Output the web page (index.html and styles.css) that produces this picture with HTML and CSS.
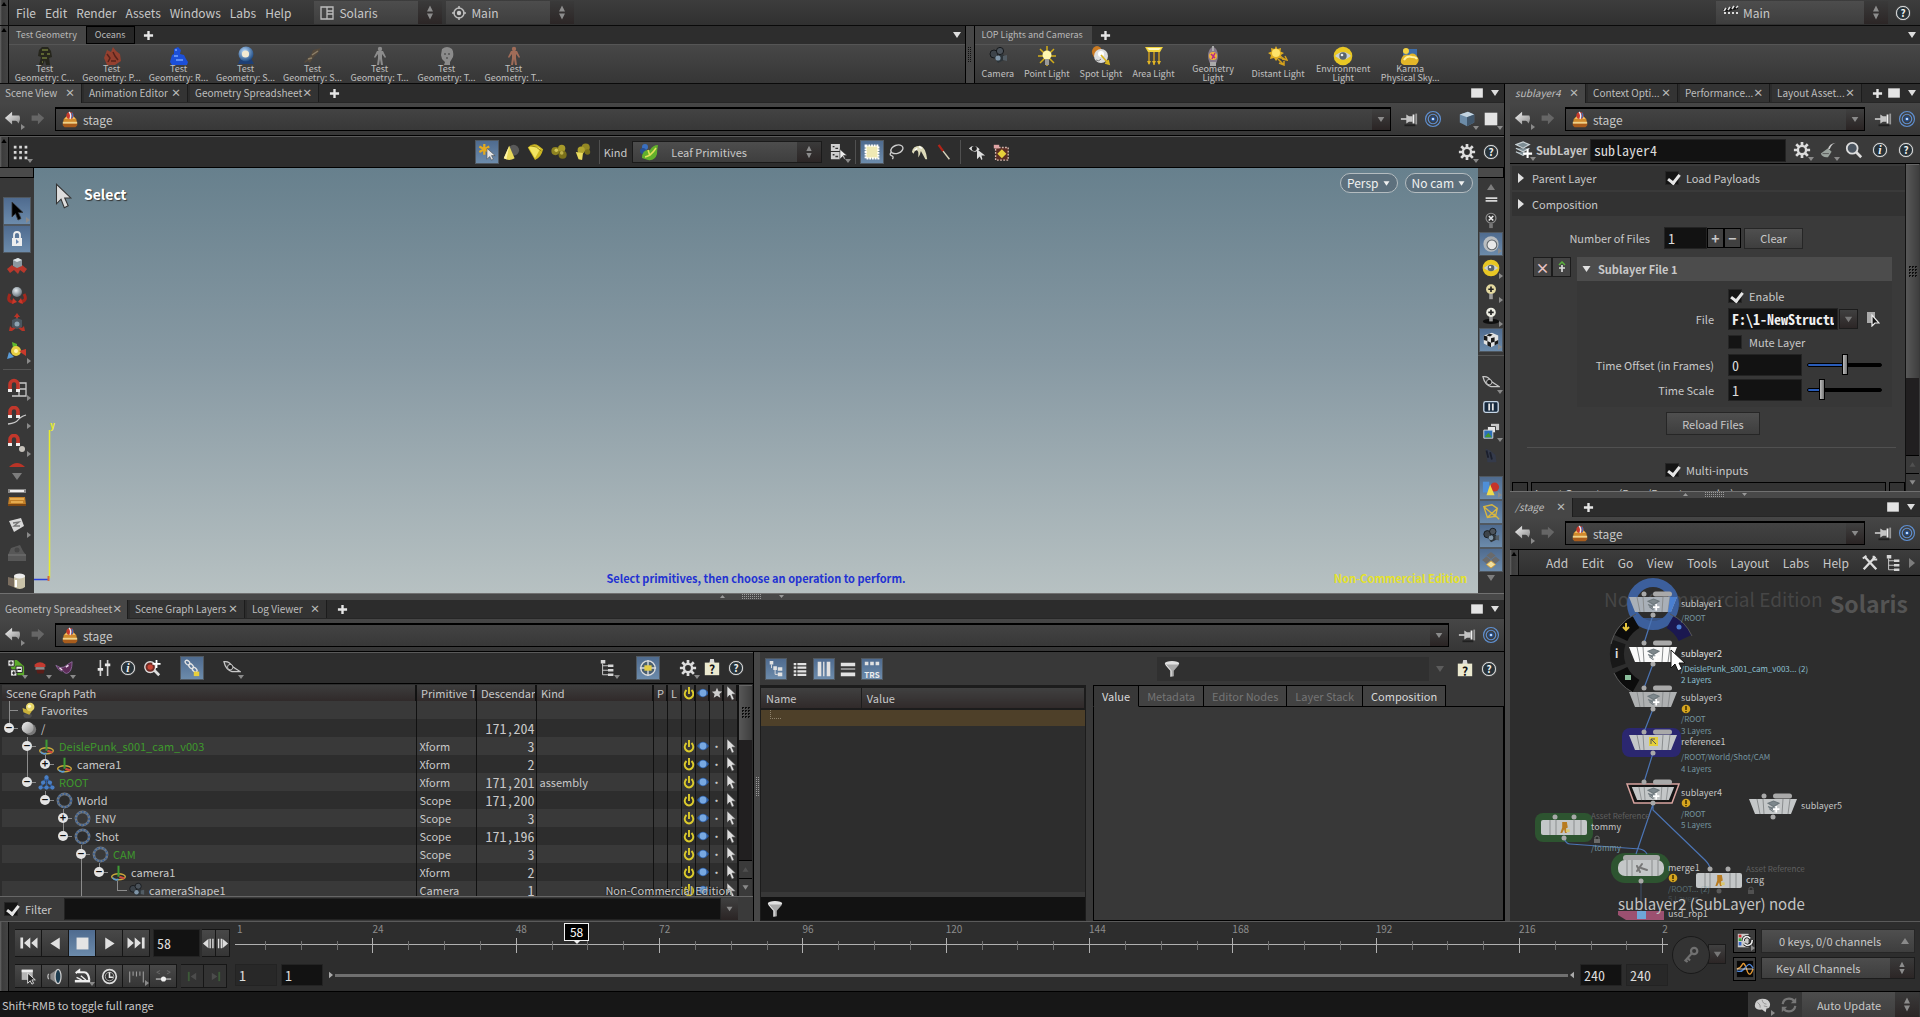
FILE: index.html
```html
<!DOCTYPE html>
<html lang="en">
<head>
<meta charset="utf-8">
<title>Solaris</title>
<link rel="stylesheet" href="styles.css">
</head>
<body>
<svg class="defs" aria-hidden="true">
  <defs>
    <linearGradient id="silver" x1="0" y1="0" x2="1" y2="1"><stop offset="0" stop-color="#f4f4f4"/><stop offset="1" stop-color="#8c8c8c"/></linearGradient>
    <radialGradient id="blueball" cx=".4" cy=".35" r=".7"><stop offset="0" stop-color="#bfe0ff"/><stop offset="1" stop-color="#15427c"/></radialGradient>
    <radialGradient id="greyball" cx=".4" cy=".35" r=".7"><stop offset="0" stop-color="#e6edf2"/><stop offset="1" stop-color="#5c6870"/></radialGradient>
  </defs>
  <symbol id="back" viewBox="0 0 20 20"><path d="M1 9l8-7v4h8q2 4-1 9-1-3-3-3H9v4z" fill="url(#silver)"/></symbol>
  <symbol id="fwd" viewBox="0 0 20 20"><path d="M18 9l-7-6v3H4v6h7v4z" fill="#666"/></symbol>
  <symbol id="stage" viewBox="0 0 20 20"><path d="M3 9l3-3h8l3 3 1 6-2 2H4l-2-2z" fill="#d08a2c"/><path d="M2 14h16v2l-2 2H4l-2-2z" fill="#a85c1c"/><path d="M2 12h16v2H2z" fill="#efd28a"/><path d="M4 9h12l-2-3H6z" fill="#f0c060"/><circle cx="10" cy="5" r="4" fill="#c93a2c"/><path d="M9 1q3 3 1 8" stroke="#e8eef8" stroke-width="1.6" fill="none"/><path d="M12 2q2 3 0 6" stroke="#3c6cb4" stroke-width="1.4" fill="none"/></symbol>
  <symbol id="pin" viewBox="0 0 20 20"><path d="M1 10h7" stroke="#ddd" stroke-width="1.600"/><path d="M7 5l3 2h4v6h-4l-3 2z" fill="#c4c4c4"/><path d="M15 5v10" stroke="#f0f0f0" stroke-width="2"/><path d="M18 4v12" stroke="#9a9a9a" stroke-width="2"/><path d="M5 17h12" stroke="#202020" stroke-width="2"/></symbol>
  <symbol id="target" viewBox="0 0 20 20"><g fill="none" stroke="#5f8fd0" stroke-width="1.300"><circle cx="10" cy="10" r="8.300"/><circle cx="10" cy="10" r="5.300"/></g><circle cx="10" cy="10" r="3" fill="#214a86"/><circle cx="10" cy="10" r="1.500" fill="#bcd9ff"/></symbol>
  <symbol id="cube" viewBox="0 0 20 20"><path d="M2 5l9-3 7 3v9l-8 4-8-4z" fill="#6d8ca8"/><path d="M2 5l9-3 7 3-8 3z" fill="#c4d4e0"/><path d="M10 8l8-3v9l-8 4z" fill="#41576c"/></symbol>
  <symbol id="gear" viewBox="0 0 20 20"><g stroke="#dcdcdc" stroke-width="3"><path d="M10 1v5M10 14v5M1 10h5M14 10h5M3.600 3.600l3.500 3.500M13 13l3.500 3.500M16.400 3.600l-3.500 3.500M7 13l-3.500 3.500"/></g><circle cx="10" cy="10" r="4.500" fill="none" stroke="#dcdcdc" stroke-width="2.600"/></symbol>
  <symbol id="search" viewBox="0 0 20 20"><path d="M12 12l6 6" stroke="#ddd" stroke-width="3"/><circle cx="8" cy="8" r="6" fill="#4b5560" stroke="#ddd" stroke-width="2"/></symbol>
  <symbol id="plus" viewBox="0 0 12 12"><path d="M6 1v10M1 6h10" stroke="#e6e6e6" stroke-width="2.600"/></symbol>
  <symbol id="pane" viewBox="0 0 12 12"><path d="M1 2h10v8H1z" fill="#e4e4e4"/></symbol>
  <symbol id="down" viewBox="0 0 12 12"><path d="M2 3h8l-4 6z" fill="currentColor"/></symbol>
  <symbol id="up" viewBox="0 0 12 12"><path d="M2 9h8L6 3z" fill="currentColor"/></symbol>
  <symbol id="right" viewBox="0 0 12 12"><path d="M3 1v10l6-5z" fill="currentColor"/></symbol>
  <symbol id="spin" viewBox="0 0 12 18"><path d="M3 8l3-6 3 6zM3 10h6l-3 6z" fill="#8c8c8c"/></symbol>
  <symbol id="layout" viewBox="0 0 14 14"><path d="M1 1h12v12H1zM7 1v12M7 8h6M7 5h6" fill="none" stroke="#bdbdbd" stroke-width="1.300"/></symbol>
  <symbol id="radial" viewBox="0 0 14 14"><circle cx="7" cy="7" r="5" fill="none" stroke="#bdbdbd" stroke-width="1.500"/><circle cx="7" cy="7" r="2.200" fill="#ccc"/><path d="M7 0v3M7 11v3M0 7h3M11 7h3" stroke="#bdbdbd" stroke-width="1.500"/></symbol>
  <symbol id="clap" viewBox="0 0 18 18"><path d="M2 8h14v8H2z" fill="#444"/><path d="M1 5l15-3v3L2 8z" fill="#111"/><path d="M2 7l2-3M6 6l2-3M10 5l2-3M14 4l2-2" stroke="#ddd" stroke-width="1.600"/><path d="M2 9h14" stroke="#ddd" stroke-dasharray="2 2" stroke-width="2"/></symbol>
  <symbol id="crag" viewBox="0 0 20 20"><path d="M7 1h6l3 4 1 6-3 1 1 7h-4l-1-5-2 5H4l2-8-3-1 1-6z" fill="#26261d"/><path d="M7 4h6M6 8h3M12 8h3M7 12h5M7 16h1" stroke="#6f7a3a" stroke-width="1.300"/></symbol>
  <symbol id="pig" viewBox="0 0 20 20"><path d="M2 12l3-8 4 2 2-5 3 4 4 3 1 7-6 4H5z" fill="#94402f"/><path d="M5 8l3 4-2 4M11 6l2 4 3 4M9 15h5" stroke="#57231b" stroke-width="1.500" fill="none"/></symbol>
  <symbol id="rubber" viewBox="0 0 20 20"><path d="M1 16l2-7 2-1V3l4-2 3 3-1 4 4 1 2 4 2 3-1 3H3z" fill="#1c4fd8"/><path d="M5 10h4M7 14h7M6 4h2" stroke="#73a4ff" stroke-width="1.500"/></symbol>
  <symbol id="shader" viewBox="0 0 20 20"><path d="M4 13l-2 5h16l-3-6z" fill="#1f3f74"/><circle cx="10" cy="8" r="7.500" fill="url(#blueball)"/><circle cx="9.500" cy="8" r="3.600" fill="#f3ead2"/></symbol>
  <symbol id="squab" viewBox="0 0 20 20"><path d="M1 16l7-7 2-5 8-2-3 5-5 5-3 5-2-2-3 2z" fill="#54493c"/><path d="M9 9l6-4M5 13l4-1" stroke="#8d8069" stroke-width="1.500"/></symbol>
  <symbol id="human" viewBox="0 0 20 20"><circle cx="10" cy="3" r="2.200" fill="currentColor"/><path d="M7 5h6l3 6-1 1-3-4v4l1 7h-2l-1-6-1 6H7l1-7V8l-3 4-1-1z" fill="currentColor"/></symbol>
  <symbol id="head" viewBox="0 0 20 20"><path d="M5 3q5-4 10 0 2 3 1 8l-3 5v3H7l1-3-3-3-1-4z" fill="#8b8b8b"/><path d="M7 8h2M11 8h2M9 12h2" stroke="#555" stroke-width="1.300"/></symbol>
  <symbol id="cam" viewBox="0 0 20 20"><circle cx="6" cy="8" r="4" fill="#3d444b" stroke="#15181b"/><circle cx="12" cy="5" r="3.600" fill="#4c545c" stroke="#15181b"/><path d="M6 11l9-3 3 5-8 4z" fill="#2d3439"/><circle cx="10" cy="12" r="2.600" fill="#7f95a8"/><path d="M15 10l4-1v6l-4-1z" fill="#525c64"/></symbol>
  <symbol id="plight" viewBox="0 0 20 20"><path d="M10 0v20M1 10h18M3 3l14 14M17 3L3 17" stroke="#d2ad1a" stroke-width="1.500"/><circle cx="10" cy="9" r="4.500" fill="#fff7b0"/><path d="M8 13h4v6H8z" fill="#9a9a9a"/></symbol>
  <symbol id="slight" viewBox="0 0 20 20"><ellipse cx="6" cy="6" rx="5" ry="6" fill="#c97a23"/><circle cx="10" cy="10" r="7" fill="#dcdcdc"/><circle cx="10" cy="8" r="3" fill="#fff"/><path d="M10 9l7 8M14 17l4 1-1-4" stroke="#d9b521" stroke-width="1.700" fill="none"/><path d="M5 14q3 2 5-1" stroke="#777" fill="none"/></symbol>
  <symbol id="alight" viewBox="0 0 20 20"><path d="M1 1h18l-3 5H4z" fill="#f0d23c"/><path d="M3 2h14l-2 2H5z" fill="#fff8c0"/><path d="M5 6v12M10 6v13M15 6v12" stroke="#c99a20" stroke-width="1.500"/><path d="M3 15l2 4 2-4zM8 15l2 4 2-4zM13 15l2 4 2-4z" fill="#e0b526"/></symbol>
  <symbol id="glight" viewBox="0 0 20 20"><ellipse cx="10" cy="10" rx="5" ry="9" fill="#857a8a"/><path d="M9 0h2v5H9zM7 16h6v4H7z" fill="#aaa"/><circle cx="10" cy="10" r="4" fill="#f2b23a"/><path d="M8 8l4 4M12 7l-3 6" stroke="#b42b8a" stroke-width="1.500"/></symbol>
  <symbol id="dlight" viewBox="0 0 20 20"><path d="M8 0l1.500 3L13 2l-.5 3.500L16 7l-3 2 1 4-3.500-1L8 15l-2-3-4 1 1-4-3-2 3.500-1.500L3 2l3.500 1z" fill="#e0ae22"/><circle cx="8" cy="7" r="4" fill="#ffe46a"/><path d="M12 10l6 4M10 13l5 5M14 13l5 1-2-4M11 17l5 2v-4" stroke="#d4a01c" stroke-width="1.500" fill="none"/></symbol>
  <symbol id="elight" viewBox="0 0 20 20"><circle cx="10" cy="10" r="9.300" fill="#e8c724"/><path d="M2 10q8-8 16 0-8 7-16 0z" fill="#c9d0d4"/><circle cx="10" cy="10" r="3.700" fill="#59646c"/><circle cx="9" cy="9" r="1.300" fill="#eee"/></symbol>
  <symbol id="sky" viewBox="0 0 20 20"><path d="M3 3h14v8H3z" fill="#3e6ca8"/><path d="M1 14q2-7 8-5 5-4 9 3 2 3-2 7H4q-4-1-3-5z" fill="#e3b628"/><path d="M4 14q3-5 8-3 4 0 5 2" stroke="#fff2a0" stroke-width="2" fill="none"/><circle cx="6" cy="5" r="3" fill="#f5d240"/></symbol>
  <symbol id="dots" viewBox="0 0 20 20"><g fill="#d8d8d8"><path d="M2 3h3v3H2zM8 3h3v3H8zM14 3h3v3h-3zM2 9h3v3H2zM8 9h3v3H8zM14 9h3v3h-3zM2 15h3v3H2zM8 15h3v3H8zM14 15h3v3h-3z"/></g></symbol>
  <symbol id="cursor" viewBox="0 0 20 20"><path d="M5 1v15l3.500-3.500L11 19l3-1.500-2.700-6H16z" fill="currentColor" stroke="#333" stroke-width=".8"/></symbol>
  <symbol id="selall" viewBox="0 0 20 20"><path d="M7 1v12M1.500 4l11 6M12.500 4l-11 6" stroke="#e3aa20" stroke-width="2.500"/><path d="M10 6v12l3-3 2 4 2-1-2-4h4z" fill="#e6e6e6" stroke="#444" stroke-width=".6"/></symbol>
  <symbol id="cone" viewBox="0 0 20 20"><circle cx="13" cy="8" r="6" fill="#595959"/><path d="M8 3l6 14q-6 4-12 0z" fill="#e9d95a"/><path d="M8 3l-3 15-3-1z" fill="#fff5a8"/></symbol>
  <symbol id="bell" viewBox="0 0 20 20"><path d="M2 5q6-6 12-2l5 4q-2 9-9 12z" fill="#cdb823"/><path d="M3 5q7-3 13 1l-6 11z" fill="#f2e562"/><path d="M5 3q7 0 12 6" stroke="#8f7b12" fill="none"/></symbol>
  <symbol id="blob" viewBox="0 0 20 20"><circle cx="6" cy="9" r="4.500" fill="#8e8320"/><circle cx="13" cy="6" r="4" fill="#a79a2a"/><circle cx="14" cy="13" r="4.500" fill="#7a701a"/><circle cx="7" cy="8" r="2" fill="#d2c658"/><circle cx="13" cy="11" r="2" fill="#bdb04a"/></symbol>
  <symbol id="blob2" viewBox="0 0 20 20"><circle cx="13" cy="5" r="4.500" fill="#948824"/><circle cx="8" cy="8" r="4" fill="#b0a32e"/><path d="M2 10l8 1-1 8-4-1z" fill="#eadc5e"/><circle cx="15" cy="10" r="3" fill="#7a701a"/></symbol>
  <symbol id="leaf" viewBox="0 0 20 20"><circle cx="6" cy="5" r="3" fill="#3a6fc0"/><circle cx="4" cy="9" r="3" fill="#274f94"/><path d="M3 16q0-9 8-8 3-5 8-5-1 5-1 9-2 7-9 6z" fill="#63b02c"/><path d="M6 15q6-1 11-9M9 8l2 6" stroke="#e4e25a" stroke-width="1.500" fill="none"/></symbol>
  <symbol id="listcur" viewBox="0 0 20 20"><path d="M1 1h10v8H1zM1 10h10v8H1z" fill="#cfcfcf"/><path d="M3 4h2M6 6h3M3 13h2M6 15h3" stroke="#333" stroke-width="1.500"/><path d="M11 7v11l3-3 2 3 1-1-2-3h4z" fill="#eee" stroke="#333" stroke-width=".7"/></symbol>
  <symbol id="marquee" viewBox="0 0 20 20"><path d="M3 3h14v14H3z" fill="#efe9b4" stroke="#fff" stroke-width="2.500" stroke-dasharray="2 1"/></symbol>
  <symbol id="lasso" viewBox="0 0 20 20"><ellipse cx="11" cy="7" rx="7" ry="4.500" transform="rotate(-20 11 7)" fill="none" stroke="#cfcfcf" stroke-width="1.500"/><path d="M5 10q-3 3 0 4 3 1 1 4" fill="none" stroke="#cfcfcf" stroke-width="1.500"/></symbol>
  <symbol id="brush" viewBox="0 0 20 20"><path d="M1 10q1-7 9-7 6 1 8 15h-2l-5-9q-1 5-3 7 1-8-2-8-2 0-3 4z" fill="#dcd9b8"/><path d="M4 8l3-2M9 4l3 2" stroke="#fff" stroke-width="1.500"/></symbol>
  <symbol id="knife" viewBox="0 0 20 20"><path d="M4 2l5 7" stroke="#b42418" stroke-width="2.500"/><path d="M9 9l7 9" stroke="#d8d4bc" stroke-width="1.600"/></symbol>
  <symbol id="eyecur" viewBox="0 0 20 20"><path d="M1 6q6-6 12 1-5 6-12-1z" fill="#e3e3e3"/><circle cx="7" cy="6" r="2.800" fill="#222"/><path d="M10 7v11l3-3 2 4 1-1-1-4h4z" fill="#ddd"/></symbol>
  <symbol id="boxsel" viewBox="0 0 20 20"><path d="M4 5h14v14H4z" fill="#5a2d25" stroke="#d3b7ae" stroke-dasharray="2 1.500" stroke-width="1.500"/><path d="M11 7l5 5-5 5-5-5z" fill="#e8cf3a"/><path d="M2 2h6v4H2z" fill="#e0a4a4"/></symbol>
  <symbol id="lock" viewBox="0 0 20 20"><path d="M7 9V6q0-3 3-3t3 3v3" fill="none" stroke="#eee" stroke-width="1.800"/><path d="M5 9h10v8H5z" fill="#eee"/><path d="M9 10v5l3-2z" fill="#6c8bb4"/></symbol>
  <symbol id="move" viewBox="0 0 20 20"><path d="M0 12l5-4 2 2 6 0 2-2 5 4-3 4-4-3-2 4-4-4-4 3z" fill="#b8382c"/><path d="M6 3l5-2 4 2v6l-5 2-4-2z" fill="#8c989f"/><path d="M6 3l5-2 4 2-5 2z" fill="#dfe5e8"/></symbol>
  <symbol id="rot" viewBox="0 0 20 20"><path d="M3 9q-4 8 4 8M17 9q4 7-4 8" fill="none" stroke="#a4281d" stroke-width="3"/><path d="M6 13l4 4-5 2zM14 13l-3 4 5 2z" fill="#c9382a"/><circle cx="10" cy="7" r="5" fill="url(#greyball)"/></symbol>
  <symbol id="scale" viewBox="0 0 20 20"><path d="M10 0l3 4h-2v3H9V4H7zM2 18l1-5 2 2 3-2 1 2-4 3zM18 18l-1-5-2 2-3-2-1 2 4 3z" fill="#b83427"/><path d="M5 7l5-2 5 2v7l-5 2-5-2z" fill="#4a565f"/><circle cx="10" cy="11" r="2.500" fill="#8ea3b1"/></symbol>
  <symbol id="handle" viewBox="0 0 20 20"><path d="M5 1l5 2 0 5-4-1z" fill="#5fb82e"/><circle cx="9" cy="10" r="5" fill="#e7cf42"/><path d="M12 10l7-2v7l-3-2z" fill="#c93a2c"/><path d="M0 18l2-7 5 5z" fill="#5a9bd6"/><circle cx="9" cy="10" r="2" fill="#fff5b0"/></symbol>
  <symbol id="maggrid" viewBox="0 0 20 20"><path d="M10 5h9v13H5M10 11h9M12 5v13" stroke="#c9c9c9" stroke-width="1.300" fill="none"/><path d="M3 11V6.500a3.700 3.700 0 0 1 8 0V11" fill="none" stroke="#c2372b" stroke-width="3.600"/><path d="M1 11h4v3H1zM9 11h4v3H9z" fill="#eee"/></symbol>
  <symbol id="magcurve" viewBox="0 0 20 20"><path d="M1 18q8-1 10-4t8-5" stroke="#c9c9c9" stroke-width="1.300" fill="none"/><path d="M3 9V5.500a3.700 3.700 0 0 1 8 0V9" fill="none" stroke="#c2372b" stroke-width="3.600"/><path d="M1 9h4v3H1zM9 9h4v3H9z" fill="#eee"/></symbol>
  <symbol id="magpt" viewBox="0 0 20 20"><circle cx="15" cy="15" r="3" fill="#c6c2bb"/><path d="M3 9V5.500a3.700 3.700 0 0 1 8 0V9" fill="none" stroke="#c2372b" stroke-width="3.600"/><path d="M1 9h4v3H1zM9 9h4v3H9z" fill="#eee"/></symbol>
  <symbol id="magtop" viewBox="0 0 20 20"><path d="M2 6q8-8 16 0z" fill="#b83427"/><path d="M5 12h10l-5 7z" fill="#7d7d7d"/></symbol>
  <symbol id="bench" viewBox="0 0 20 20"><path d="M1 2h18v4H1z" fill="#8b8b8b"/><path d="M3 4h14" stroke="#eee" stroke-width="2"/><path d="M2 10h16l1 8H1z" fill="#c4822a"/><path d="M3 12h14M4 15h12" stroke="#f0b95c" stroke-width="1.500"/><path d="M1 17h18v2H1z" fill="#7c4612"/></symbol>
  <symbol id="note" viewBox="0 0 20 20"><path d="M2 6l12-3 3 8-10 6z" fill="#d9d9d9"/><path d="M6 8l6-1-5 4 6 0" stroke="#777" stroke-width="1.300" fill="none"/></symbol>
  <symbol id="box" viewBox="0 0 20 20"><path d="M4 5l9-3 3 6 3 4v6H1v-6z" fill="#575757"/><path d="M1 12h18" stroke="#777"/><circle cx="10" cy="7" r="2.500" fill="#454545"/></symbol>
  <symbol id="film" viewBox="0 0 20 20"><path d="M1 6l8 2v9l-8-3z" fill="#7b6e60"/><path d="M7 5h11v11q-5 4-11 0z" fill="#c9c2a8"/><ellipse cx="12.500" cy="5" rx="5.500" ry="2.500" fill="#ececec"/><path d="M9 9v7" stroke="#fff" stroke-width="2"/></symbol>
  <symbol id="bars" viewBox="0 0 20 20"><path d="M4 8h13v2H4zM4 11h13v2H4z" fill="#d6d6d6"/></symbol>
  <symbol id="nolight" viewBox="0 0 20 20"><circle cx="10" cy="8" r="5.500" fill="#333" stroke="#8f8f8f" stroke-width="1.300"/><path d="M7.500 5.500l5 5M12.500 5.500l-5 5" stroke="#eee" stroke-width="1.800"/><path d="M8 14h4v5H8z" fill="#777"/></symbol>
  <symbol id="sphere" viewBox="0 0 20 20"><circle cx="10" cy="10" r="8.500" fill="#b9bdc0"/><circle cx="11" cy="11" r="6" fill="#5e6468"/><circle cx="11" cy="11" r="4.800" fill="#e8e8e8"/></symbol>
  <symbol id="bulb" viewBox="0 0 20 20"><circle cx="10" cy="7" r="5.500" fill="#e4d9a0"/><path d="M10 4v6M7 7h6" stroke="#222" stroke-width="1.800"/><path d="M8 12h4v6H8z" fill="#9c9c9c"/></symbol>
  <symbol id="bulb2" viewBox="0 0 20 20"><ellipse cx="10" cy="16" rx="9" ry="3" fill="#0e0e0e"/><circle cx="10" cy="6" r="5.300" fill="#eeeee4"/><path d="M10 3v6M7 6h6" stroke="#222" stroke-width="1.800"/><path d="M8 11h4v5H8z" fill="#9c9c9c"/></symbol>
  <symbol id="checker" viewBox="0 0 20 20"><path d="M2 5l9-3 7 3v9l-8 4-8-4z" fill="#e2e2e2"/><path d="M2 5l4 1v5l-4-1zM10 8l4-1v5l-4 1zM6 11l4 2v5l-4-2zM14 12l4-2v4l-4 2zM8 3l4 1-3 2-4-1z" fill="#191919"/></symbol>
  <symbol id="specs" viewBox="0 0 20 20"><path d="M1 3q6-1 9 5l9 6-9 0Q3 12 1 3z" fill="#3a3a3a" stroke="#c8c8c8" stroke-width="1.400"/><circle cx="8" cy="9" r="3" fill="#222" stroke="#ccc"/></symbol>
  <symbol id="split" viewBox="0 0 20 20"><rect x="2" y="4" width="16" height="12" rx="2" fill="#16283c" stroke="#c6d6e6" stroke-width="1.500"/><path d="M8 6v8M12 6v8" stroke="#e6e6e6" stroke-width="2"/></symbol>
  <symbol id="pics" viewBox="0 0 20 20"><path d="M10 2h9v7h-9z" fill="#c8c8c8"/><path d="M6 5h9v7H6z" fill="#e8e8e8" stroke="#333"/><path d="M2 9h10v9H2z" fill="#2c6fb8" stroke="#ddd"/><path d="M3 17l4-5 4 5z" fill="#45962c"/></symbol>
  <symbol id="dimfig" viewBox="0 0 20 20"><path d="M4 3l5 2 6 5 1 8H6z" fill="#343a4a"/><path d="M5 5l2 8M9 7l2 8" stroke="#1b1f2c" stroke-width="2"/></symbol>
  <symbol id="shapes" viewBox="0 0 20 20"><path d="M1 3h7v12H1z" fill="#4f8fd8"/><circle cx="14" cy="9" r="5" fill="#c5332a"/><path d="M9 6l5 12H5z" fill="#f0dc4c"/></symbol>
  <symbol id="bbox" viewBox="0 0 20 20"><path d="M2 4l9-2 6 4-2 9-9 1zM2 4l13 11M17 6L6 16M13 12l6 6" stroke="#d8b640" stroke-width="1.500" fill="none"/></symbol>
  <symbol id="diamonds" viewBox="0 0 20 20"><path d="M10 1l5 4-5 4-5-4zM5 6l5 4-5 4-5-4zM15 6l5 4-5 4-5-4z" fill="#6a6a6a"/><path d="M10 11l5 4-5 4-5-4z" fill="#f1e0a0" stroke="#d89e30"/></symbol>
  <symbol id="treeplus" viewBox="0 0 20 20"><path d="M1 1h10l8 7v10H8z" fill="#5cab2c"/><path d="M1 1h7v7H1zM10 8h7v7h-7zM4 12h7v7H4z" fill="#eee" stroke="#222"/><path d="M2.500 4.500h4M4.500 2.500v4M11.500 11.500h4M5.500 15.500h4M7.500 13.500v4" stroke="#111" stroke-width="1.200"/></symbol>
  <symbol id="redcap" viewBox="0 0 20 20"><path d="M4 6q6-5 12 0v3H4z" fill="#c43a30"/><path d="M5 9h10v3H5z" fill="#8c8c8c"/><path d="M6 12h9l-1 4H7z" fill="#5b1d18"/></symbol>
  <symbol id="mask" viewBox="0 0 20 20"><path d="M1 7q5 4 9 2 5-4 9-6 0 12-6 13-3 0-4-3-4 2-8-6z" fill="#5d2c58" stroke="#8d6a9c"/><path d="M5 10l3 2M12 9l3-2" stroke="#f0e0f0" stroke-width="1.600"/></symbol>
  <symbol id="sliders" viewBox="0 0 20 20"><path d="M6 1v18M14 1v18" stroke="#cfcfcf" stroke-width="1.800"/><path d="M3 10h6v3H3zM11 5h6v3h-6z" fill="#e8e8e8"/></symbol>
  <symbol id="findplus" viewBox="0 0 20 20"><path d="M12 12l6 6" stroke="#ddd" stroke-width="3"/><circle cx="8" cy="9" r="6" fill="#6f2b24" stroke="#ddd" stroke-width="1.500"/><circle cx="8" cy="9" r="3" fill="#c84434"/><path d="M15 1v9M10.500 5.500h9" stroke="#fff" stroke-width="2"/></symbol>
  <symbol id="chain" viewBox="0 0 20 20"><g fill="none" stroke="#e4e4e4" stroke-width="1.500"><ellipse cx="5" cy="4" rx="3" ry="2" transform="rotate(45 5 4)"/><ellipse cx="9" cy="8" rx="3" ry="2" transform="rotate(45 9 8)"/><ellipse cx="13" cy="12" rx="3" ry="2" transform="rotate(45 13 12)"/></g><path d="M12 14h6v5h-6z" fill="#e8cf3a"/></symbol>
  <symbol id="tree" viewBox="0 0 20 20"><path d="M2 1h5v4H2zM10 6h6v3h-6zM10 11h6v3h-6zM10 16h6v3h-6z" fill="#d6d6d6"/><path d="M4 5v12.500h6M4 7.500h6M4 12.500h6" stroke="#d6d6d6" fill="none"/></symbol>
  <symbol id="wheel" viewBox="0 0 20 20"><circle cx="10" cy="10" r="8" fill="#4a5f70" stroke="#ddd" stroke-width="1.500"/><path d="M10 1v18M1 10h18" stroke="#ddd" stroke-width="1.500"/><path d="M6 7h8v6H6z" fill="#e4cc46"/></symbol>
  <symbol id="clip" viewBox="0 0 20 20"><path d="M8 0l4 0 1 5H7z" fill="#d8d8d8"/><path d="M2 4h16v14H2z" fill="#ebe9cf"/></symbol>
  <symbol id="tree2" viewBox="0 0 20 20"><path d="M3 1h4v4H3zM7 7h4v4H7zM12 8h5v4h-5zM12 14h5v4h-5z" fill="#e2e2e2"/><path d="M5 5v4M9 11v5h3" stroke="#e2e2e2" fill="none"/></symbol>
  <symbol id="list" viewBox="0 0 20 20"><path d="M3 4.500h14M3 8.500h14M3 12.500h14M3 16.500h14" stroke="#e2e2e2" stroke-width="2.500"/><path d="M6.500 3v15" stroke="#333" stroke-width="1.200"/></symbol>
  <symbol id="cols" viewBox="0 0 20 20"><path d="M3 2h4v16H3zM9 2h1.500v16H9zM13 2h4v16h-4z" fill="#e2e2e2"/></symbol>
  <symbol id="rows" viewBox="0 0 20 20"><path d="M2 3h16v4H2zM2 9.500h16v1H2zM2 14h16v4H2z" fill="#e2e2e2"/></symbol>
  <symbol id="trs" viewBox="0 0 20 20"><path d="M2 3h4v4H2zM8 3h4v4H8zM14 3h4v4h-4z" fill="#e2e2e2"/></symbol>
  <symbol id="funnel" viewBox="0 0 20 20"><ellipse cx="10" cy="4" rx="8" ry="3" fill="#e0e0e0"/><path d="M2 5l6 7v7l4-1v-6l6-7z" fill="#a9a9a9"/><path d="M3 5l6 7v6" stroke="#eee" fill="none"/></symbol>
  <symbol id="pushpin" viewBox="0 0 20 20"><ellipse cx="9" cy="16" rx="5" ry="3" fill="#4c4c4c"/><path d="M3 7l11 4-3 4-7-3z" fill="#c9b03a"/><circle cx="12" cy="6" r="5" fill="#e8d768"/><circle cx="11" cy="5" r="2" fill="#fffbd0"/></symbol>
  <symbol id="disc" viewBox="0 0 20 20"><circle cx="12" cy="11" r="7" fill="#777"/><circle cx="9" cy="9" r="7" fill="url(#silver)"/></symbol>
  <symbol id="xform" viewBox="0 0 20 20"><ellipse cx="10" cy="15" rx="8" ry="3.500" fill="none" stroke="#c9a83c" stroke-width="1.700"/><path d="M3 16q3 4 7 2" stroke="#5a9bd6" stroke-width="1.800" fill="none"/><path d="M11 15l6 2" stroke="#d0483c" stroke-width="2.400"/><path d="M10 2v13" stroke="#3f9a35" stroke-width="2.400"/></symbol>
  <symbol id="assembly" viewBox="0 0 20 20"><path d="M10 3L3 16h14zM10 3v13" stroke="#2d5a9c" stroke-width="2" fill="none"/><g fill="#4a7fc4"><circle cx="10" cy="4" r="2.500"/><circle cx="6" cy="10" r="2.500"/><circle cx="14" cy="10" r="2.500"/><circle cx="3" cy="16" r="2.500"/><circle cx="10" cy="16" r="2.500"/><circle cx="17" cy="16" r="2.500"/></g></symbol>
  <symbol id="scope" viewBox="0 0 20 20"><circle cx="10" cy="10" r="7.800" fill="none" stroke="#707a84" stroke-width="3"/><circle cx="10" cy="10" r="7.800" fill="none" stroke="#3a5f94" stroke-width="2" stroke-dasharray="2 2"/></symbol>
  <symbol id="power" viewBox="0 0 12 16"><path d="M3.500 5q-3 3-1 6.500 3.500 4 7 0 2-3.500-1-6.500M6 2v7" stroke="#dccb2c" stroke-width="1.900" fill="none"/></symbol>
  <symbol id="eye" viewBox="0 0 14 14"><path d="M0 7q7-10 14 0-7 10-14 0z" fill="#2c5da4"/><circle cx="7" cy="7" r="4" fill="#78a8e0"/></symbol>
  <symbol id="star" viewBox="0 0 14 14"><path d="M7 1l1.800 4 4.200.4-3.200 2.900 1 4.200L7 10.300l-3.800 2.200 1-4.200L1 5.400 5.200 5z" fill="#cfcfcf"/></symbol>
  <symbol id="first" viewBox="0 0 24 20"><path d="M3 4h3v12H3zM14 4v12L7 10zM22 4v12l-7-6z" fill="#e0e0e0"/></symbol>
  <symbol id="last" viewBox="0 0 24 20"><path d="M18 4h3v12h-3zM2 4v12l7-6zM10 4v12l7-6z" fill="#e0e0e0"/></symbol>
  <symbol id="play" viewBox="0 0 20 20"><path d="M5 3v14l11-7z" fill="#e0e0e0"/></symbol>
  <symbol id="rplay" viewBox="0 0 20 20"><path d="M15 3v14L4 10z" fill="#e0e0e0"/></symbol>
  <symbol id="stop" viewBox="0 0 20 20"><path d="M3 3h14v14H3z" fill="#e4e4e4"/></symbol>
  <symbol id="stepb" viewBox="0 0 14 14"><path d="M7 2v10L1 7zM8 2h1.500v10H8zM11 2h1.500v10H11z" fill="#ddd"/></symbol>
  <symbol id="stepf" viewBox="0 0 14 14"><path d="M7 2v10l6-5zM2 2h1.500v10H2zM5 2h1.500v10H5z" fill="#ddd"/></symbol>
  <symbol id="flip" viewBox="0 0 20 20"><path d="M2 2h13v12H2z" fill="#b5b5b5"/><path d="M2 2h13v3H2z" fill="#eee"/><path d="M9 6v12l3-3 2 4 2-1-2-4h4z" fill="#222" stroke="#eee"/></symbol>
  <symbol id="sound" viewBox="0 0 20 20"><path d="M4 7l9-6q4 9 0 18l-9-6z" fill="#8a8a8a"/><ellipse cx="13" cy="10" rx="3.500" ry="8.500" fill="#1d3d50" stroke="#ccc" stroke-width="1.500"/><path d="M2 7q-2 3 0 6" stroke="#bbb" stroke-width="1.500" fill="none"/></symbol>
  <symbol id="loop" viewBox="0 0 20 20"><path d="M2 6l4-3v2h6q5 0 6 9" fill="none" stroke="#eee" stroke-width="2.600"/><path d="M1 14h18v3H1z" fill="#eee"/><path d="M3 11l6 3M8 9l6 5" stroke="#eee" stroke-width="1.500"/></symbol>
  <symbol id="clock" viewBox="0 0 20 20"><circle cx="10" cy="10" r="8" fill="#333" stroke="#ddd" stroke-width="2"/><circle cx="10" cy="10" r="5" fill="none" stroke="#bbb"/><path d="M10 5v6h4" stroke="#eee" stroke-width="1.800" fill="none"/></symbol>
  <symbol id="tick" viewBox="0 0 20 20"><path d="M2 4v13M6 4v5M10 4v6M14 4v5M18 4v13" stroke="#9a9a9a" stroke-width="1.300"/></symbol>
  <symbol id="keys" viewBox="0 0 20 20"><path d="M1 13h18" stroke="#bdbdbd" stroke-width="1.500"/><circle cx="10" cy="13" r="3" fill="#eee"/><path d="M6 3L2 5l4 2M14 3l4 2-4 2" stroke="#6a6a6a" fill="none"/></symbol>
  <symbol id="prevk" viewBox="0 0 14 14"><path d="M2 2h2v10H2z" fill="#3d5a38"/><path d="M11 3v8L5 7z" fill="#4c4c4c"/></symbol>
  <symbol id="nextk" viewBox="0 0 14 14"><path d="M10 2h2v10h-2z" fill="#3d5a38"/><path d="M3 3v8l6-4z" fill="#4c4c4c"/></symbol>
  <symbol id="key" viewBox="0 0 20 20"><circle cx="13.500" cy="5.500" r="3.500" fill="none" stroke="#707070" stroke-width="2.500"/><path d="M11 8l-8 9M6 13l3 3M4 15l2 3" stroke="#707070" stroke-width="2.300"/></symbol>
  <symbol id="chan" viewBox="0 0 20 20"><path d="M2 2h12v15H2z" fill="#ccc"/><path d="M3 3h3v3H3z" fill="#c33"/><path d="M3 7h3v3H3z" fill="#3a3"/><path d="M3 11h3v4H3z" fill="#36c"/><path d="M8 10q0-5 5-5l3 2M18 9q0 6-6 6l-3-2" stroke="#111" stroke-width="3.500" fill="none"/><path d="M8 10q0-5 5-5l3 2M18 9q0 6-6 6l-3-2" stroke="#eee" stroke-width="1.800" fill="none"/></symbol>
  <symbol id="wave" viewBox="0 0 20 20"><path d="M1 1h18v18H1z" fill="#080808"/><path d="M1 10q4-1 6-5t5 6 7-1" stroke="#e69a35" stroke-width="1.500" fill="none"/><path d="M1 12q5 2 8-2t5-5 5 4" stroke="#4f86d8" stroke-width="1.500" fill="none"/><path d="M1 10h18" stroke="#ddd"/></symbol>
  <symbol id="brain" viewBox="0 0 20 20"><path d="M2 11q0-7 8-8 8 0 9 6 0 5-4 5l-1 4-4-3q-7 1-8-4z" fill="#cfcfcf"/><path d="M5 7q4 3 3 6M10 4q1 5 5 5M12 11l4 1" stroke="#8d8d8d" fill="none"/></symbol>
  <symbol id="refresh" viewBox="0 0 20 20"><path d="M3 9q1-6 7-6 4 0 6 3M17 11q-1 6-7 6-4 0-6-3" fill="none" stroke="#777" stroke-width="2.500"/><path d="M18 2v6h-6zM2 18v-6h6z" fill="#777"/></symbol>
  <symbol id="layers" viewBox="0 0 20 20"><path d="M1 4l8-3 7 3-7 4zM1 8l8 4 7-4M1 12l8 4 5-3" fill="#7d8d94" stroke="#c7d0d4" stroke-width="1.300"/><path d="M14 9v10M9 14h10" stroke="#fff" stroke-width="2.300"/></symbol>
  <symbol id="broom" viewBox="0 0 20 20"><path d="M19 2q-5 1-7 7l-2 0q1-6 9-7z" fill="#ccc"/><path d="M2 14l8-6 4 4-4 6q-6 1-8-4z" fill="#9aa39d"/><path d="M4 14l7 0" stroke="#555"/></symbol>
  <symbol id="pick" viewBox="0 0 14 16"><path d="M1 1h8v11H1z" fill="#aaa"/><path d="M6 4v11l3-3 4 0z" fill="#111" stroke="#eee" stroke-width="1.200"/></symbol>
  <symbol id="wrench" viewBox="0 0 20 20"><path d="M4 3l13 14M16 3L3 17" stroke="#ddd" stroke-width="2.600"/><path d="M2 5l4-3M14 2v4h4" stroke="#ddd" stroke-width="2.200" fill="none"/></symbol>
  <symbol id="insert" viewBox="0 0 12 12"><path d="M6 4v7M3 7h6" stroke="#dadada" stroke-width="1.700"/><path d="M3 4l3-3 3 3" stroke="#59b03c" stroke-width="1.500" fill="none"/></symbol>
</svg>

<header class="menubar">
  <i class="grip"><svg><use href="#up"/></svg></i>
  <nav class="menu"><button>File</button><button>Edit</button><button>Render</button><button>Assets</button><button>Windows</button><button>Labs</button><button>Help</button></nav>
  <label class="combo desk"><svg class="s14"><use href="#layout"/></svg><select aria-label="Desktop"><option>Solaris</option></select><svg class="spin"><use href="#spin"/></svg></label>
  <label class="combo desk"><svg class="s14"><use href="#radial"/></svg><select aria-label="Radial menu"><option>Main</option></select><svg class="spin"><use href="#spin"/></svg></label>
  <span class="fill"></span>
  <label class="combo take"><svg class="s18"><use href="#clap"/></svg><select aria-label="Take"><option>Main</option></select><svg class="spin"><use href="#spin"/></svg></label>
  <button class="q" aria-label="Help">?</button>
</header>

<section class="shelves">
  <i class="grip"><svg><use href="#up"/></svg></i>
  <div class="shelf shelf-a">
    <div class="stabs"><button class="on">Test Geometry</button><button class="box">Oceans</button><button class="add" aria-label="Add shelf"><svg><use href="#plus"/></svg></button><span class="fill"></span><svg class="s12"><use href="#down"/></svg></div>
    <div class="tools">
      <button><svg><use href="#crag"/></svg><span>Test<br>Geometry: C...</span></button>
      <button><svg><use href="#pig"/></svg><span>Test<br>Geometry: P...</span></button>
      <button><svg><use href="#rubber"/></svg><span>Test<br>Geometry: R...</span></button>
      <button><svg><use href="#shader"/></svg><span>Test<br>Geometry: S...</span></button>
      <button><svg><use href="#squab"/></svg><span>Test<br>Geometry: S...</span></button>
      <button><svg class="grey"><use href="#human"/></svg><span>Test<br>Geometry: T...</span></button>
      <button><svg><use href="#head"/></svg><span>Test<br>Geometry: T...</span></button>
      <button><svg class="skin"><use href="#human"/></svg><span>Test<br>Geometry: T...</span></button>
    </div>
  </div>
  <i class="vsplit"></i>
  <div class="shelf shelf-b">
    <div class="stabs"><button class="on">LOP Lights and Cameras</button><button class="add" aria-label="Add shelf"><svg><use href="#plus"/></svg></button><span class="fill"></span><svg class="s12"><use href="#down"/></svg></div>
    <div class="tools">
      <button class="one"><svg><use href="#cam"/></svg><span>Camera</span></button>
      <button class="one"><svg><use href="#plight"/></svg><span>Point Light</span></button>
      <button class="one"><svg><use href="#slight"/></svg><span>Spot Light</span></button>
      <button class="one"><svg><use href="#alight"/></svg><span>Area Light</span></button>
      <button><svg><use href="#glight"/></svg><span>Geometry<br>Light</span></button>
      <button class="one"><svg><use href="#dlight"/></svg><span>Distant Light</span></button>
      <button><svg><use href="#elight"/></svg><span>Environment<br>Light</span></button>
      <button><svg><use href="#sky"/></svg><span>Karma<br>Physical Sky...</span></button>
    </div>
  </div>
</section>

<main class="desktop">
  <div class="col col-left">
    <section class="panel">
      <div class="tabs"><button class="on t1">Scene View<b>×</b></button><button class="t2">Animation Editor<b>×</b></button><button class="t3">Geometry Spreadsheet<b>×</b></button><button class="add" aria-label="New tab"><svg><use href="#plus"/></svg></button><span class="fill"></span><svg class="s14"><use href="#pane"/></svg><svg class="s12"><use href="#down"/></svg></div>
      <div class="path"><button class="ib dr" aria-label="Back"><svg><use href="#back"/></svg></button><button class="ib" aria-label="Forward"><svg><use href="#fwd"/></svg></button>
        <label class="crumb"><svg class="s18"><use href="#stage"/></svg><input value="stage" aria-label="Scene path"><svg class="drop"><use href="#down"/></svg></label>
        <button class="ib" aria-label="Pin"><svg><use href="#pin"/></svg></button><button class="ib" aria-label="Link"><svg><use href="#target"/></svg></button><button class="ib dd gap10" aria-label="Shading"><svg><use href="#cube"/></svg></button><button class="ib dd" aria-label="Layout"><svg><use href="#stop"/></svg></button></div>
      <div class="bar viewbar">
        <div class="grp lead"><i class="grip"><svg><use href="#up"/></svg></i><button class="ib dd" aria-label="Grid"><svg><use href="#dots"/></svg></button></div>
        <div class="grp">
          <button class="ib on" aria-label="Select all"><svg><use href="#selall"/></svg></button><button class="ib" aria-label="Objects"><svg><use href="#cone"/></svg></button><button class="ib" aria-label="Geometry"><svg><use href="#bell"/></svg></button><button class="ib" aria-label="Points"><svg><use href="#blob"/></svg></button><button class="ib" aria-label="Dynamics"><svg><use href="#blob2"/></svg></button>
          <i class="sep"></i><label for="kind">Kind</label>
          <span class="combo kind"><svg class="s20"><use href="#leaf"/></svg><select id="kind"><option>Leaf Primitives</option></select><svg class="spin"><use href="#spin"/></svg></span>
          <button class="ib dd" aria-label="Selection rules"><svg><use href="#listcur"/></svg></button><i class="sep"></i>
          <button class="ib on" aria-label="Box select"><svg><use href="#marquee"/></svg></button><button class="ib" aria-label="Lasso"><svg><use href="#lasso"/></svg></button><button class="ib" aria-label="Brush"><svg><use href="#brush"/></svg></button><button class="ib" aria-label="Laser"><svg><use href="#knife"/></svg></button><i class="sep"></i>
          <button class="ib" aria-label="Visible only"><svg><use href="#eyecur"/></svg></button><button class="ib" aria-label="Contained"><svg><use href="#boxsel"/></svg></button>
        </div>
        <div class="grp"><button class="ib dd" aria-label="Options"><svg><use href="#gear"/></svg></button><button class="q" aria-label="Help">?</button></div>
      </div>
      <div class="viewrow">
        <aside class="strip strip-l">
          <i class="cap left"></i>
          <button class="ib on dr first" aria-label="Select"><svg class="black"><use href="#cursor"/></svg></button>
          <button class="ib on" aria-label="Lock"><svg><use href="#lock"/></svg></button>
          <button class="ib" aria-label="Move"><svg><use href="#move"/></svg></button>
          <button class="ib" aria-label="Rotate"><svg><use href="#rot"/></svg></button>
          <button class="ib" aria-label="Scale"><svg><use href="#scale"/></svg></button>
          <button class="ib dr" aria-label="Handle"><svg><use href="#handle"/></svg></button>
          <i class="rule"></i>
          <button class="ib dr" aria-label="Grid snap"><svg><use href="#maggrid"/></svg></button>
          <button class="ib dr" aria-label="Curve snap"><svg><use href="#magcurve"/></svg></button>
          <button class="ib dr" aria-label="Point snap"><svg><use href="#magpt"/></svg></button>
          <button class="ib short" aria-label="More"><svg><use href="#magtop"/></svg></button>
          <button class="ib" aria-label="Workbench"><svg><use href="#bench"/></svg></button>
          <button class="ib dr" aria-label="Notes"><svg><use href="#note"/></svg></button>
          <button class="ib" aria-label="Box"><svg><use href="#box"/></svg></button>
          <button class="ib" aria-label="Render"><svg><use href="#film"/></svg></button>
        </aside>
        <div class="viewport">
          <svg class="bigcur"><use href="#cursor"/></svg><span class="mode">Select</span>
          <div class="cams"><button>Persp <svg><use href="#down"/></svg></button><button>No cam <svg><use href="#down"/></svg></button></div>
          <svg class="axis" viewBox="0 0 24 160"><path d="M15.500 6v148" stroke="#e8ec2c" stroke-width="1.500"/><path d="M0 155.500h15" stroke="#2b40dc" stroke-width="1.500"/><path d="M14.500 152v5" stroke="#d06a40" stroke-width="2"/><text x="16" y="5">y</text></svg>
          <span class="prompt">Select primitives, then choose an operation to perform.</span>
          <span class="edition">Non-Commercial Edition</span>
        </div>
        <aside class="strip strip-r">
          <i class="cap right"></i>
          <svg class="s12 mid"><use href="#up"/></svg><svg class="s18 bars"><use href="#bars"/></svg>
          <button class="ib" aria-label="No lights"><svg><use href="#nolight"/></svg></button>
          <button class="ib on dr" aria-label="Headlight"><svg><use href="#sphere"/></svg></button>
          <button class="ib dr" aria-label="Visibility"><svg><use href="#elight"/></svg></button>
          <button class="ib dr" aria-label="Add light"><svg><use href="#bulb"/></svg></button>
          <button class="ib dr" aria-label="Shadows"><svg><use href="#bulb2"/></svg></button>
          <button class="ib on dr" aria-label="Materials"><svg><use href="#checker"/></svg></button>
          <i class="rule"></i>
          <button class="ib dd" aria-label="Ghost"><svg><use href="#specs"/></svg></button>
          <button class="ib" aria-label="Pause"><svg><use href="#split"/></svg></button>
          <button class="ib dd" aria-label="Background"><svg><use href="#pics"/></svg></button>
          <button class="ib" aria-label="Scene"><svg><use href="#dimfig"/></svg></button>
          <button class="ib on dr second" aria-label="Geometry"><svg><use href="#shapes"/></svg></button>
          <button class="ib on" aria-label="Bounds"><svg><use href="#bbox"/></svg></button>
          <button class="ib on" aria-label="Cameras"><svg><use href="#cam"/></svg></button>
          <button class="ib on" aria-label="Guides"><svg><use href="#diamonds"/></svg></button>
          <svg class="s12 mid"><use href="#down"/></svg>
        </aside>
      </div>
      <i class="hsplit"><svg viewBox="0 0 80 6"><path d="M8 5h5L10.500 2zM67 2h5l-2.500 3z" fill="#999"/><path d="M30 1.500h20M30 3.500h20M30 5.500h20" stroke="#999" stroke-dasharray="1 1"/></svg></i>
    </section>

    <section class="panel">
      <div class="tabs"><button class="on t4">Geometry Spreadsheet<b>×</b></button><button class="t5">Scene Graph Layers<b>×</b></button><button class="t6">Log Viewer<b>×</b></button><button class="add" aria-label="New tab"><svg><use href="#plus"/></svg></button><span class="fill"></span><svg class="s14"><use href="#pane"/></svg><svg class="s12"><use href="#down"/></svg></div>
      <div class="path"><button class="ib dr" aria-label="Back"><svg><use href="#back"/></svg></button><button class="ib" aria-label="Forward"><svg><use href="#fwd"/></svg></button>
        <label class="crumb"><svg class="s18"><use href="#stage"/></svg><input value="stage" aria-label="Spreadsheet path"><svg class="drop"><use href="#down"/></svg></label>
        <button class="ib" aria-label="Pin"><svg><use href="#pin"/></svg></button><button class="ib" aria-label="Link"><svg><use href="#target"/></svg></button></div>
      <div class="sheet">
        <div class="graph">
          <div class="bar gbar">
            <button class="ib dd" aria-label="Expand"><svg><use href="#treeplus"/></svg></button><button class="ib dd" aria-label="Primitives"><svg><use href="#redcap"/></svg></button><button class="ib dd" aria-label="Mask"><svg><use href="#mask"/></svg></button>
            <button class="ib gap16" aria-label="Parameters"><svg><use href="#sliders"/></svg></button><button class="q info" aria-label="Information">i</button><button class="ib" aria-label="Find"><svg><use href="#findplus"/></svg></button>
            <button class="ib on gap16" aria-label="Link selection"><svg><use href="#chain"/></svg></button><button class="ib dd gap16" aria-label="View"><svg><use href="#specs"/></svg></button>
            <span class="fill"></span>
            <button class="ib dd" aria-label="Tree"><svg><use href="#tree"/></svg></button><button class="ib on gap16" aria-label="Follow"><svg><use href="#wheel"/></svg></button><button class="ib dd gap16" aria-label="Options"><svg><use href="#gear"/></svg></button><button class="ib clip" aria-label="Tips"><svg><use href="#clip"/></svg><b>?</b></button><button class="q" aria-label="Help">?</button>
          </div>
          <div class="tablewrap">
            <div class="tscroll">
            <table>
              <colgroup><col><col class="c1"><col class="c2"><col class="c3"><col class="c4"><col class="c4"><col class="c4"><col class="c4"><col class="c4"><col class="c4"></colgroup>
              <thead><tr><th>Scene Graph Path</th><th>Primitive T</th><th>Descendan</th><th>Kind</th><th>P</th><th>L</th><th><svg class="pw"><use href="#power"/></svg></th><th><svg class="ey"><use href="#eye"/></svg></th><th><svg class="ey"><use href="#star"/></svg></th><th><svg class="cu"><use href="#cursor"/></svg></th></tr></thead>
              <tbody>
                <tr><td><div class="node"><i class="g tee"></i><svg><use href="#pushpin"/></svg>Favorites</div></td><td></td><td></td><td></td><td></td><td></td><td></td><td></td><td></td><td></td></tr>
                <tr><td><div class="node"><i class="g n">−</i><svg><use href="#disc"/></svg>/</div></td><td></td><td>171,204</td><td></td><td></td><td></td><td></td><td></td><td></td><td></td></tr>
                <tr class="f"><td><div class="node lime"><i class="g"></i><i class="g n m">−</i><svg><use href="#xform"/></svg>DeislePunk_s001_cam_v003</div></td><td>Xform</td><td>3</td><td></td><td></td><td></td><td><svg class="pw"><use href="#power"/></svg></td><td><svg class="ey"><use href="#eye"/></svg></td><td>·</td><td><svg class="cu"><use href="#cursor"/></svg></td></tr>
                <tr class="f"><td><div class="node"><i class="g"></i><i class="g v"></i><i class="g n">+</i><svg><use href="#xform"/></svg>camera1</div></td><td>Xform</td><td>2</td><td></td><td></td><td></td><td><svg class="pw"><use href="#power"/></svg></td><td><svg class="ey"><use href="#eye"/></svg></td><td>·</td><td><svg class="cu"><use href="#cursor"/></svg></td></tr>
                <tr class="f"><td><div class="node lime"><i class="g"></i><i class="g n">−</i><svg><use href="#assembly"/></svg>ROOT</div></td><td>Xform</td><td>171,201</td><td>assembly</td><td></td><td></td><td><svg class="pw"><use href="#power"/></svg></td><td><svg class="ey"><use href="#eye"/></svg></td><td>·</td><td><svg class="cu"><use href="#cursor"/></svg></td></tr>
                <tr class="f"><td><div class="node"><i class="g"></i><i class="g"></i><i class="g n">−</i><svg><use href="#scope"/></svg>World</div></td><td>Scope</td><td>171,200</td><td></td><td></td><td></td><td><svg class="pw"><use href="#power"/></svg></td><td><svg class="ey"><use href="#eye"/></svg></td><td>·</td><td><svg class="cu"><use href="#cursor"/></svg></td></tr>
                <tr class="f"><td><div class="node"><i class="g"></i><i class="g"></i><i class="g"></i><i class="g n m">+</i><svg><use href="#scope"/></svg>ENV</div></td><td>Scope</td><td>3</td><td></td><td></td><td></td><td><svg class="pw"><use href="#power"/></svg></td><td><svg class="ey"><use href="#eye"/></svg></td><td>·</td><td><svg class="cu"><use href="#cursor"/></svg></td></tr>
                <tr class="f"><td><div class="node"><i class="g"></i><i class="g"></i><i class="g"></i><i class="g n">−</i><svg><use href="#scope"/></svg>Shot</div></td><td>Scope</td><td>171,196</td><td></td><td></td><td></td><td><svg class="pw"><use href="#power"/></svg></td><td><svg class="ey"><use href="#eye"/></svg></td><td>·</td><td><svg class="cu"><use href="#cursor"/></svg></td></tr>
                <tr class="f"><td><div class="node lime"><i class="g"></i><i class="g"></i><i class="g"></i><i class="g"></i><i class="g n m">−</i><svg><use href="#scope"/></svg>CAM</div></td><td>Scope</td><td>3</td><td></td><td></td><td></td><td><svg class="pw"><use href="#power"/></svg></td><td><svg class="ey"><use href="#eye"/></svg></td><td>·</td><td><svg class="cu"><use href="#cursor"/></svg></td></tr>
                <tr class="f"><td><div class="node"><i class="g"></i><i class="g"></i><i class="g"></i><i class="g"></i><i class="g v"></i><i class="g n">−</i><svg><use href="#xform"/></svg>camera1</div></td><td>Xform</td><td>2</td><td></td><td></td><td></td><td><svg class="pw"><use href="#power"/></svg></td><td><svg class="ey"><use href="#eye"/></svg></td><td>·</td><td><svg class="cu"><use href="#cursor"/></svg></td></tr>
                <tr class="f"><td><div class="node"><i class="g"></i><i class="g"></i><i class="g"></i><i class="g"></i><i class="g v"></i><i class="g"></i><i class="g elbow"></i><svg><use href="#cam"/></svg>cameraShape1</div></td><td>Camera</td><td>1</td><td></td><td></td><td></td><td><svg class="pw"><use href="#power"/></svg></td><td><svg class="ey"><use href="#eye"/></svg></td><td></td><td><svg class="cu"><use href="#cursor"/></svg></td></tr>
              </tbody>
            </table>
            <span class="nce">Non-Commercial Edition</span>
            </div>
            <div class="scroll tall"><i class="thumb"></i><svg class="off"><use href="#up"/></svg><svg><use href="#down"/></svg></div>
          </div>
          <div class="filter"><label class="chk"><input type="checkbox" checked>Filter</label><input class="field" aria-label="Filter text"><svg class="drop"><use href="#down"/></svg></div>
        </div>
        <i class="vsplit thin"></i>
        <div class="detail">
          <div class="dbar">
            <button class="ib on" aria-label="Tree view"><svg><use href="#tree2"/></svg></button><button class="ib" aria-label="List view"><svg><use href="#list"/></svg></button><button class="ib on" aria-label="Columns"><svg><use href="#cols"/></svg></button><button class="ib" aria-label="Rows"><svg><use href="#rows"/></svg></button><button class="ib on trs" aria-label="Transforms"><svg><use href="#trs"/></svg><b>TRS</b></button>
            <span class="fill"></span>
            <label class="find"><svg class="s18"><use href="#funnel"/></svg><input aria-label="Find attribute"></label><svg class="s12 dimmer"><use href="#down"/></svg>
            <button class="ib clip" aria-label="Tips"><svg><use href="#clip"/></svg><b>?</b></button><button class="q" aria-label="Help">?</button>
          </div>
          <div class="dbody">
            <div class="attrs">
              <table><colgroup><col class="n"><col></colgroup><thead><tr><th>Name</th><th>Value</th></tr></thead><tbody><tr><td colspan="2"><i></i></td></tr></tbody></table>
              <label class="ffield"><svg class="s18"><use href="#funnel"/></svg><input aria-label="Filter attributes"></label>
            </div>
            <div class="views"><div class="vtabs"><button class="on">Value</button><button disabled>Metadata</button><button disabled>Editor Nodes</button><button disabled>Layer Stack</button><button>Composition</button><span class="fill"></span></div><div class="vbody"></div></div>
          </div>
        </div>
      </div>
    </section>
  </div>

  <div class="col col-right">
    <section class="panel">
      <div class="tabs"><button class="on it t7">sublayer4<b>×</b></button><button class="t8">Context Opti...<b>×</b></button><button class="t8">Performance...<b>×</b></button><button class="t8">Layout Asset...<b>×</b></button><button class="add" aria-label="New tab"><svg><use href="#plus"/></svg></button><span class="fill"></span><svg class="s14"><use href="#pane"/></svg><svg class="s12"><use href="#down"/></svg></div>
      <div class="path"><button class="ib dr" aria-label="Back"><svg><use href="#back"/></svg></button><button class="ib" aria-label="Forward"><svg><use href="#fwd"/></svg></button>
        <label class="crumb"><svg class="s18"><use href="#stage"/></svg><input value="stage" aria-label="Parameter path"><svg class="drop"><use href="#down"/></svg></label>
        <button class="ib" aria-label="Pin"><svg><use href="#pin"/></svg></button><button class="ib" aria-label="Link"><svg><use href="#target"/></svg></button></div>
      <div class="nodehead"><button class="ib dd" aria-label="Node type"><svg><use href="#layers"/></svg></button><label for="nname">SubLayer</label><input id="nname" class="field" value="sublayer4"><div class="grp"><button class="ib dd" aria-label="Options"><svg><use href="#gear"/></svg></button><button class="ib dd" aria-label="Clean"><svg><use href="#broom"/></svg></button><button class="ib" aria-label="Search"><svg><use href="#search"/></svg></button><button class="q info" aria-label="Information">i</button><button class="q" aria-label="Help">?</button></div></div>
      <div class="params">
        <div class="plist">
          <div class="fold"><svg><use href="#right"/></svg><span>Parent Layer</span><label class="chk"><input type="checkbox" checked>Load Payloads</label></div>
          <div class="fold"><svg><use href="#right"/></svg><span>Composition</span></div>
          <div class="prow"><label for="nf">Number of Files</label><input id="nf" class="field w43" value="1"><button class="pm">+</button><button class="pm">−</button><button class="btn clear">Clear</button></div>
          <div class="multi">
            <div class="mbtns"><button aria-label="Remove" class="x">×</button><button aria-label="Insert"><svg><use href="#insert"/></svg></button></div>
            <div class="mbox">
              <h3><svg><use href="#down"/></svg>Sublayer File 1</h3>
              <div class="mgrid">
                <span></span><label class="chk"><input type="checkbox" checked>Enable</label>
                <label for="file">File</label><div class="filec"><input id="file" class="field bold" value="F:\1-NewStructure"><button class="sq" aria-label="Recent"><svg><use href="#down"/></svg></button><button class="pk" aria-label="Browse"><svg><use href="#pick"/></svg></button></div>
                <span></span><label class="chk"><input type="checkbox">Mute Layer</label>
                <label for="toff">Time Offset (in Frames)</label><div class="num"><input id="toff" class="field" value="0"><input type="range" class="r50" value="50" aria-label="Time offset slider"></div>
                <label for="tsc">Time Scale</label><div class="num"><input id="tsc" class="field" value="1"><input type="range" class="r17" value="17" aria-label="Time scale slider"></div>
              </div>
            </div>
          </div>
          <button class="btn reload">Reload Files</button>
          <hr>
          <label class="chk multiin"><input type="checkbox" checked>Multi-inputs</label>
          <div class="ops"><i></i><span>Input Operators (Drag/Drop to reorder)</span><i></i></div>
        </div>
        <div class="scroll"><i class="thumb"></i><svg class="off"><use href="#up"/></svg><svg><use href="#down"/></svg></div>
      </div>
      <i class="hsplit"><svg viewBox="0 0 80 6"><path d="M8 5h5L10.500 2zM67 2h5l-2.500 3z" fill="#999"/><path d="M30 1.500h20M30 3.500h20M30 5.500h20" stroke="#999" stroke-dasharray="1 1"/></svg></i>
    </section>

    <section class="panel">
      <div class="tabs"><button class="on it t9">/stage<b>×</b></button><button class="add" aria-label="New tab"><svg><use href="#plus"/></svg></button><span class="fill"></span><svg class="s14"><use href="#pane"/></svg><svg class="s12"><use href="#down"/></svg></div>
      <div class="path"><button class="ib dr" aria-label="Back"><svg><use href="#back"/></svg></button><button class="ib" aria-label="Forward"><svg><use href="#fwd"/></svg></button>
        <label class="crumb"><svg class="s18"><use href="#stage"/></svg><input value="stage" aria-label="Network path"><svg class="drop"><use href="#down"/></svg></label>
        <button class="ib" aria-label="Pin"><svg><use href="#pin"/></svg></button><button class="ib" aria-label="Link"><svg><use href="#target"/></svg></button></div>
      <div class="netmenu"><i class="grip"><svg><use href="#up"/></svg></i><nav class="menu"><button>Add</button><button>Edit</button><button>Go</button><button>View</button><button>Tools</button><button>Layout</button><button>Labs</button><button>Help</button></nav><button class="ib" aria-label="Tools"><svg><use href="#wrench"/></svg></button><button class="ib" aria-label="Tree"><svg><use href="#tree"/></svg></button><svg class="s12 mid"><use href="#right"/></svg></div>
      <div class="network">
        <svg width="100%" height="100%">
          <defs>
            <symbol id="trap" viewBox="0 0 50 17" overflow="visible"><path d="M1 1h48l-6 15H7z" fill="currentColor"/><path d="M9 1l3 15M15 1l1 15M35 1l-1 15M42 1l-2 15" stroke="#8a8d8e"/></symbol>
            <symbol id="lay" viewBox="0 0 12 12"><path d="M1 3l5-2 5 2-5 3zM1 6l5 3 3-2M2 8l4 3" fill="#7d878c" stroke="#6d777c"/><path d="M8.500 5.500v6M5.500 8.500h6" stroke="#fff" stroke-width="1.600"/></symbol>
            <symbol id="ports" viewBox="0 0 50 30" overflow="visible"><circle cx="16" cy="4" r="2.500" fill="#a9a9a9"/><rect x="25" y="1.500" width="19" height="5" rx="2.500" fill="#a9a9a9"/><circle cx="25" cy="25" r="2.500" fill="#a9a9a9"/></symbol>
            <symbol id="warn" viewBox="0 0 10 10"><circle cx="5" cy="5" r="4.300" fill="#d6a51f"/><path d="M5 2v4M5 7v1.300" stroke="#3d2c00" stroke-width="1.500"/></symbol>
            <symbol id="puppet" viewBox="0 0 12 14"><path d="M3 1h5l1 6-2 1 1 5H6L5 9l-2 4H1l2-6z" fill="#b87b20"/><path d="M7 9h4v3H7z" fill="#d9c870"/></symbol>
            <symbol id="plock" viewBox="0 0 8 8"><path d="M2 4V2q2-2 4 0v2" fill="none" stroke="#6a6a6a"/><path d="M1 4h6v4H1z" fill="#6a6a6a"/></symbol>
          </defs>
          <text class="wm" x="94" y="31">Non-Commercial Edition</text>
          <circle cx="143" cy="28" r="21.500" fill="none" stroke="#3c5f9c" stroke-width="9"/>
          <path d="M125 42h36l-5 8h-26z" fill="#3c5f9c" opacity=".8"/>
          <g fill="none" stroke-width="14"><path d="M126 46A36 36 0 0 0 111 62" stroke="#0c0c0c"/><path d="M109 66A36 36 0 0 0 109 90" stroke="#181818"/><path d="M111 94A36 36 0 0 0 126 110" stroke="#0c0c0c"/><path d="M160 46A36 36 0 0 1 175 62" stroke="#1b1850"/></g>
          <path d="M126 38A43 43 0 0 0 101 68M160 38A43 43 0 0 1 182 60M104 97A43 43 0 0 0 122 116" fill="none" stroke="#565656"/>
          <path d="M116 47v6M113 51l3 3 3-3" stroke="#e6c53c" stroke-width="2" fill="none"/><circle cx="169" cy="51" r="2.500" fill="#4c7ed0"/><path d="M115 99h6v5h-6z" fill="#89bd9a"/><text class="ri" x="105" y="82">i</text>
          <rect x="112" y="152" width="59" height="29" rx="8" fill="#2b2770"/>
          <rect x="25" y="237" width="58" height="29" rx="8" fill="#2d5430"/>
          <rect x="101" y="277" width="59" height="30" rx="14" fill="#2d5430"/>
          <g fill="none" stroke="#4b74b4" stroke-width="1.200"><path d="M143 39l-9 28M143 88l-9 24M143 133l-9 23M143 177l-9 29M143 228l-17 50M143 228v6l52 50q5 5 5 9M54 262q2 6 6 6l70 5q5 1 7 5"/><path d="M131 305v30" stroke="#3c4a60"/></g>
          <g color="#c4c7c8">
            <svg x="118" y="14" width="50" height="30"><use href="#ports"/></svg><svg x="118" y="20" width="50" height="17" color="#a9b0b8"><use href="#trap"/></svg><path d="M160 21h7l-6 15h-3z" fill="#4a7fd0"/><svg x="137" y="22" width="13" height="13"><use href="#lay"/></svg>
            <svg x="118" y="63" width="50" height="30"><use href="#ports"/></svg><svg x="118" y="70" width="50" height="17" color="#fafafa"><use href="#trap"/></svg><svg x="137" y="72" width="13" height="13"><use href="#lay"/></svg>
            <svg x="118" y="108" width="50" height="30"><use href="#ports"/></svg><svg x="118" y="115" width="50" height="17" color="#aeb0b1"><use href="#trap"/></svg><svg x="137" y="117" width="13" height="13"><use href="#lay"/></svg>
            <svg x="118" y="152" width="50" height="30"><use href="#ports"/></svg><svg x="118" y="158" width="50" height="17"><use href="#trap"/></svg><path d="M139 161h9v9h-9z" fill="#e4d03c"/><path d="M141 163l5 5M141 168v-5h4" stroke="#555" fill="none"/>
            <path d="M117 208h52l-7 19h-38z" fill="#151515" stroke="#d8a4a0" stroke-width="1.500"/><svg x="118" y="202" width="50" height="30"><use href="#ports"/></svg><svg x="119" y="210" width="48" height="15"><use href="#trap"/></svg><svg x="137" y="211" width="13" height="13"><use href="#lay"/></svg>
            <svg x="238" y="216" width="50" height="30"><use href="#ports"/></svg><svg x="238" y="222" width="50" height="17"><use href="#trap"/></svg><svg x="257" y="224" width="13" height="13"><use href="#lay"/></svg>
          </g>
          <g fill="#a9a9a9"><circle cx="45" cy="241" r="2.500"/><circle cx="64" cy="241" r="2.500"/><circle cx="54" cy="262" r="2.500"/><rect x="113" y="279" width="37" height="6" rx="3"/><circle cx="131" cy="305" r="2.500"/><circle cx="200" cy="293" r="2.500"/><circle cx="218" cy="293" r="2.500"/><circle cx="209" cy="315" r="2.500" fill="#5a5a5a"/></g>
          <g fill="#c4c7c8"><rect x="31" y="244" width="46" height="15" rx="2"/><rect x="108" y="284" width="46" height="16" rx="7"/><rect x="186" y="297" width="46" height="15" rx="2"/></g>
          <path d="M40 244v15M46 244v15M64 244v15M71 244v15M117 284v16M122 284v16M142 284v16M148 284v16M195 297v15M200 297v15M220 297v15M226 297v15" stroke="#8a8d8e"/>
          <svg x="49" y="245" width="12" height="13"><use href="#puppet"/></svg><svg x="204" y="298" width="12" height="13"><use href="#puppet"/></svg>
          <path d="M127 295l5-7M131 292l6 2M127 290l3 6" stroke="#777" stroke-width="2" stroke-linecap="round"/>
          <path d="M108 335h46v9h-38l-8-5z" fill="#9c5070"/><path d="M127 335h9v8h-9z" fill="#6fa6d8"/>
          <svg x="171" y="128" width="10" height="10"><use href="#warn"/></svg><svg x="171" y="222" width="10" height="10"><use href="#warn"/></svg><svg x="158" y="297" width="10" height="10"><use href="#warn"/></svg>
          <svg x="83" y="259" width="8" height="8"><use href="#plock"/></svg><svg x="237" y="310" width="8" height="8" opacity=".6"><use href="#plock"/></svg>
          <g class="nl"><text x="171" y="31">sublayer1</text><text x="171" y="81" fill="#e0e0e0">sublayer2</text><text x="171" y="125">sublayer3</text><text x="171" y="169">reference1</text><text x="171" y="220">sublayer4</text><text x="291" y="233">sublayer5</text><text x="81" y="254">tommy</text><text x="158" y="295">merge1</text><text x="236" y="307">crag</text><text x="158" y="341">usd_rop1</text></g>
          <g class="nd"><text x="171" y="45">/ROOT</text><text x="171" y="96" class="hi">/DeislePunk_s001_cam_v003... (2)</text><text x="171" y="107" class="hi">2 Layers</text><text x="171" y="146">/ROOT</text><text x="171" y="158">3 Layers</text><text x="171" y="184">/ROOT/World/Shot/CAM</text><text x="171" y="196">4 Layers</text><text x="171" y="241">/ROOT</text><text x="171" y="252">5 Layers</text><text x="81" y="275">/tommy</text><text x="158" y="316" opacity=".6">/ROOT... (2)</text><text x="158" y="326" opacity=".3">5 Layers</text><text x="81" y="243" fill="#606060">Asset Reference</text><text x="236" y="296" fill="#606060">Asset Reference</text></g>
          <text class="ctx" x="320" y="37">Solaris</text>
          <text class="tip" x="108" y="334">sublayer2 (SubLayer) node</text>
          <path d="M161 74v18l4-4 3 7 4-2-3-6h6z" fill="#fff" stroke="#111"/>
        </svg>
      </div>
    </section>
  </div>
</main>

<footer class="playbar">
  <i class="grip"></i>
  <div class="transport">
    <div class="trow"><button aria-label="First"><svg class="w24"><use href="#first"/></svg></button><button aria-label="Play back"><svg><use href="#rplay"/></svg></button><button class="on" aria-label="Stop"><svg><use href="#stop"/></svg></button><button aria-label="Play"><svg><use href="#play"/></svg></button><button aria-label="Last"><svg class="w24"><use href="#last"/></svg></button><input class="field frame" value="58" aria-label="Frame"><button class="nar" aria-label="Step back"><svg><use href="#stepb"/></svg></button><button class="nar" aria-label="Step forward"><svg><use href="#stepf"/></svg></button></div>
    <div class="trow low"><button aria-label="Flipbook"><svg><use href="#flip"/></svg></button><button aria-label="Audio"><svg><use href="#sound"/></svg></button><button class="dd" aria-label="Loop"><svg><use href="#loop"/></svg></button><button aria-label="Realtime"><svg><use href="#clock"/></svg></button><button class="dr" aria-label="Range"><svg><use href="#tick"/></svg></button><button aria-label="Keys"><svg><use href="#keys"/></svg></button><button class="dk first" aria-label="Previous key"><svg><use href="#prevk"/></svg></button><button class="dk" aria-label="Next key"><svg><use href="#nextk"/></svg></button></div>
  </div>
  <div class="timeline">
    <div class="ruler"><span class="start">1</span>
      <i></i><i></i><i></i><i>24</i><i></i><i></i><i></i><i>48</i><i></i><i></i><i></i><i>72</i><i></i><i></i><i></i><i>96</i><i></i><i></i><i></i><i>120</i><i></i><i></i><i></i><i>144</i><i></i><i></i><i></i><i>168</i><i></i><i></i><i></i><i>192</i><i></i><i></i><i></i><i>216</i><i></i><i></i><i></i><i class="end">2</i>
      <b class="marker" style="left:23.8%">58</b>
    </div>
    <div class="range"><input class="field dim" value="1" aria-label="Global start"><input class="field" value="1" aria-label="Range start"><svg class="ends"><use href="#right"/></svg><span class="track"></span><svg class="ends flip"><use href="#right"/></svg><input class="field" value="240" aria-label="Range end"><input class="field dim" value="240" aria-label="Global end"></div>
  </div>
  <div class="keybox"><button class="sq" aria-label="Key menu"><svg><use href="#down"/></svg></button><button class="round" aria-label="Set key"><svg><use href="#key"/></svg></button></div>
  <div class="chans">
    <button class="ibx dr" aria-label="Scoped channels"><svg><use href="#chan"/></svg></button><button class="btn keys">0 keys, 0/0 channels<svg class="s12"><use href="#up"/></svg></button>
    <button class="ibx" aria-label="Animation"><svg><use href="#wave"/></svg></button><label class="combo"><select aria-label="Key mode"><option>Key All Channels</option></select><svg class="spin"><use href="#spin"/></svg></label>
  </div>
</footer>
<div class="status"><span>Shift+RMB to toggle full range</span><div class="upd"><button class="ib dr" aria-label="Simulate"><svg><use href="#brain"/></svg></button><button class="ib" aria-label="Refresh"><svg><use href="#refresh"/></svg></button><label class="combo"><select aria-label="Update mode"><option>Auto Update</option></select><svg class="spin"><use href="#spin"/></svg></label></div></div>
</body>
</html>
```
FILE: styles.css
```css
:root { --ui: "Noto Sans CJK SC", "Noto Sans", sans-serif; --mono: "Noto Sans Mono CJK SC", "DejaVu Sans Mono", monospace; --line: #0a0a0a; }
* { box-sizing: border-box; }
body { margin: 0; height: 100vh; display: flex; flex-direction: column; overflow: hidden; background: #3a3a3a; color: #c8c8c8; font: 11px/16px var(--ui); }
button, select, input { font: inherit; color: inherit; margin: 0; padding: 0; border: 0; background: none; border-radius: 0; outline: 0; min-width: 0; }
svg { display: block; flex: none; }
i { font-style: normal; }
.defs { position: absolute; width: 0; height: 0; }
.fill { flex: 1; }
.s12 { width: 12px; height: 12px; color: #ddd; }
.s14 { width: 14px; height: 14px; }
.s18 { width: 18px; height: 18px; }
.s20 { width: 20px; height: 20px; }
.mid { color: #7d7d7d; }

/* shared controls */
.ib { position: relative; width: 24px; height: 24px; display: flex; align-items: center; justify-content: center; flex: none; }
.ib > svg { width: 18px; height: 18px; }
.on.ib { background: linear-gradient(#4f6b8f, #6c8bab); border: 1px solid #505860; }
.dd, .dr { position: relative; }
.dd::after, .dr::after { content: ""; position: absolute; right: 0; bottom: 1px; border: 3px solid transparent; border-top: 4px solid #8a8a8a; border-bottom: 0; }
.dr::after { border: 3px solid transparent; border-left: 4px solid #8a8a8a; border-right: 0; }
.q { width: 14px; height: 14px; margin: 5px; border: 1px solid #ddd; border-radius: 50%; background: #273238; color: #f0f0f0; font-weight: bold; font-size: 10px; line-height: 12px; text-align: center; flex: none; box-shadow: 0 0 1px #ddd; }
.q.info { font-family: "Liberation Serif", serif; font-style: italic; font-size: 12px; }
.grip { width: 9px; align-self: stretch; flex: none; background: linear-gradient(90deg, #666, #3c3c3c 2px, #444); border-right: 1px solid var(--line); }
.grip svg { width: 8px; height: 8px; color: #000; }
.combo { display: flex; align-items: center; background: linear-gradient(#4d4d4d, #3e3e3e); }
.combo select { flex: 1; appearance: none; align-self: stretch; }
.spin { width: 24px; height: 100%; padding: 2px 6px; background: linear-gradient(#3a3a3a, #2c2626); }
.field { background: #121212; border: 1px solid #232323; color: #dcdcdc; font: 14px/18px var(--mono); padding: 0 3px; height: 22px; }
.btn { background: linear-gradient(#4f4f4f, #3e3e3e); border: 1px solid #262626; }
.chk { display: flex; align-items: center; gap: 7px; }
input[type=checkbox] { appearance: none; width: 14px; height: 14px; background: #141414; border: 1px solid #262626; flex: none; position: relative; }
input[type=checkbox]:checked::after { content: ""; position: absolute; left: 4px; top: 0; width: 5px; height: 9px; border: solid #e6e6e6; border-width: 0 3px 3px 0; transform: rotate(38deg); }

/* main menu */
.menubar { height: 26px; display: flex; align-items: center; background: linear-gradient(#3d3d3d, #303030); border-bottom: 1px solid var(--line); font-size: 12px; padding-right: 5px; }
.menu { display: flex; gap: 9px; font-size: 12px; }
.menubar .menu { padding-left: 7px; }
.menubar .combo { height: 23px; padding-left: 6px; gap: 5px; margin-left: 4px; }
.menubar .desk { width: 128px; }
.menubar .menu + .desk { margin-left: 23px; }
.menubar .take { width: 172px; margin-right: 3px; gap: 3px; }

/* shelves */
.shelves { height: 58px; display: flex; background: #2d2d2d; border-bottom: 1px solid var(--line); }
.shelf { display: flex; flex-direction: column; min-width: 0; }
.shelf-a { flex: 955 0 0; }
.shelf-b { flex: 945 0 0; }
.stabs { height: 18px; display: flex; align-items: center; font-size: 9px; padding-right: 2px; }
.stabs button { height: 18px; padding: 0 8px; color: #b8b8b8; }
.stabs .on { background: #454545; padding: 0 9px 0 7px; }
.stabs .box { border: 1px solid #000; background: #262626; }
.stabs .add, .tabs .add { padding: 0 0 0 8px; border: 0; background: none; }
.add svg { width: 11px; height: 11px; }
.tools { flex: 1; display: flex; padding-left: 2px; background: linear-gradient(#474747, #363636); border-top: 1px solid #555; }
.tools button { position: relative; width: 67px; padding-top: 19px; flex: none; font-size: 9px; line-height: 9px; color: #c0c0c0; white-space: nowrap; display: flex; justify-content: center; text-align: center; }
.tools button > svg { position: absolute; top: 1px; left: 50%; margin-left: -10px; width: 20px; height: 20px; }
.tools .one { width: auto; padding: 23px 5px 0; line-height: 12px; }
.grey { color: #8c8c8c; } .skin { color: #a06c58; } .black { color: #000; }
.vsplit { width: 10px; flex: none; border: 1px solid #000; border-width: 0 1px; background: #474747; display: grid; place-items: center; }
.vsplit::before { content: ""; width: 5px; height: 16px; background: conic-gradient(#111 25%, #0000 0) 0 0 / 2px 2px; }
.vsplit.thin { width: 7px; border-width: 0 0 0 1px; }
.vsplit.thin::before { height: 20px; background: conic-gradient(#999 25%, #0000 0) 0 0 / 2px 2px; }

/* panes */
.desktop { flex: 1; min-height: 0; display: grid; grid-template-columns: minmax(0, 1fr) 415px; }
.col { display: grid; min-width: 0; min-height: 0; }
.col-left { grid-template-rows: minmax(0, 516fr) minmax(0, 321fr); border-right: 1px solid #000; }
.col-right { grid-template-rows: minmax(0, 414fr) minmax(0, 423fr); border-left: 5px solid #484848; }
.panel { display: flex; flex-direction: column; min-height: 0; min-width: 0; }
.tabs { height: 19px; flex: none; display: flex; align-items: center; gap: 2px; background: #2c2c2c; font-size: 10px; padding-right: 3px; border-bottom: 1px solid #262626; }
.tabs button { height: 18px; padding: 0 6px 0 5px; background: #333; border-right: 1px solid #1c1c1c; display: flex; align-items: center; justify-content: space-between; white-space: nowrap; color: #bebebe; flex: none; }
.tabs .on { height: 19px; background: #464646; }
.tabs .it { font-style: italic; }
.tabs b { font-weight: bold; font-style: normal; }
.tabs .s12 { margin-left: 3px; }
.t1 { width: 82px; } .t2 { width: 104px; } .t3 { width: 129px; } .t4 { width: 128px; } .t5 { width: 115px; } .t6 { width: 80px; } .t7 { width: 76px; } .t8 { width: 90px; } .t9 { width: 63px; }
.path { height: 33px; flex: none; display: flex; align-items: center; background: linear-gradient(#464646, #363636); border-bottom: 1px solid #000; padding: 0 1px; }
.crumb { flex: 1; min-width: 0; height: 24px; margin: 0 6px; display: flex; align-items: center; gap: 4px; padding-left: 5px; border: 1px solid #000; border-top-width: 2px; background: linear-gradient(#434343, #383838); font-size: 12px; }
.crumb input { flex: 1; }
.drop { width: 18px; height: 100%; padding: 0 4px; background: linear-gradient(#404040, #2a2424); color: #8a8a8a; }
.gap10 { margin-left: 10px; } .gap16 { margin-left: 16px; }
.bar { display: flex; align-items: center; flex: none; background: #2d2d2d; border-top: 1px solid #5a5a5a; border-bottom: 1px solid #000; }
.viewbar { height: 32px; justify-content: space-between; padding-right: 1px; }
.grp { display: flex; align-items: center; }
.lead { align-self: stretch; }
.sep { width: 1px; height: 24px; background: #505050; margin: 0 4px; }
.combo.kind { width: 190px; height: 22px; margin: 0 5px; gap: 12px; padding-left: 6px; border: 1px solid #1a1a1a; }
.viewrow { flex: 1; min-height: 0; display: flex; }
.strip { display: flex; flex-direction: column; align-items: center; background: #383838; overflow: hidden; flex: none; }
.strip-l { width: 34px; }
.strip-l .ib { width: 28px; height: 28px; }
.strip-l .ib > svg { width: 20px; height: 20px; }
.strip-l .first { margin-top: 19px; }
.strip-l .ib.short { height: 25px; }
.strip-r { width: 26px; }
.strip-r .second { margin-top: 9px; }
.strip-r .bars { margin-top: -3px; }
.strip-r .ib > svg { width: 18px; height: 18px; }
.cap { align-self: stretch; height: 10px; flex: none; background: #4a4a4a; border: 1px solid #000; border-width: 0 1px 1px 0; }
.strip-r .cap { margin-bottom: 3px; }
.rule { width: 28px; height: 1px; background: #555; margin: 4px 0; flex: none; }
.strip-r .rule { margin: 3px 0 15px; }
.viewport { flex: 1; position: relative; overflow: hidden; background: linear-gradient(#67808d, #8799a3 45%, #b7c1c2); }
.bigcur { position: absolute; left: 15px; top: 15px; width: 28px; height: 26px; color: #ddd; }
.mode { position: absolute; left: 50px; top: 18px; font-weight: bold; font-size: 14px; color: #fff; text-shadow: 1px 1px 1px #333; }
.cams { position: absolute; right: 5px; top: 5px; display: flex; gap: 7px; }
.cams button { height: 20px; padding: 0 6px; border: 1px solid #b4bcc0; border-radius: 10px; background: #5d707d; color: #f0f0f0; display: flex; align-items: center; gap: 3px; font-size: 12px; line-height: 16px; }
.cams svg { width: 9px; height: 9px; }
.axis { position: absolute; left: 0; bottom: 9px; width: 24px; height: 160px; overflow: visible; }
.axis text { fill: #e8ec2c; font: bold 10px var(--mono); }
.prompt, .edition { position: absolute; bottom: 7px; font-weight: bold; font-size: 11px; line-height: 16px; white-space: nowrap; }
.prompt { left: 0; right: 0; text-align: center; color: #2332d2; }
.edition { right: 11px; color: #e4e22c; }
.hsplit { height: 7px; flex: none; background: linear-gradient(#707070 1px, #484848 1px); display: grid; justify-items: center; }
.hsplit svg { width: 80px; height: 6px; }

/* scene graph */
.sheet { flex: 1; min-height: 0; display: grid; grid-template-columns: 753fr 7px 744fr; }
.graph, .detail { display: flex; flex-direction: column; min-width: 0; min-height: 0; }
.gbar { height: 32px; padding: 0 5px 0 4px; }
.clip b { position: absolute; inset: 6px 0 0; text-align: center; color: #111; font-size: 12px; line-height: 14px; }
.tablewrap { flex: 1; min-height: 0; display: flex; background: #2d2d2d; padding: 1px 1px 0 2px; }
.tscroll { flex: 1; position: relative; overflow: hidden; }
table { border-collapse: collapse; table-layout: fixed; width: 100%; }
.tscroll th { height: 16px; padding: 0 0 0 4px; text-align: left; font-weight: normal; line-height: 15px; background: linear-gradient(#3d3d3d, #302a2a); border-right: 2px solid #111; white-space: nowrap; overflow: hidden; }
.tscroll td { height: 18px; padding: 0 0 0 3px; border-right: 1px solid #111; line-height: 16px; white-space: nowrap; overflow: hidden; }
.tscroll td:first-child { padding: 0; }
.tscroll td:nth-child(3) { text-align: right; font: 14px/16px var(--mono); padding-right: 1px; }
.tscroll td:nth-child(9) { text-align: center; }
.tscroll tbody tr:nth-child(odd) { background: #393939; }
.tscroll th:nth-child(n+5), .tscroll td:nth-child(n+5) { padding: 0 0 0 1px; }
.tscroll th:nth-child(5), .tscroll th:nth-child(6) { padding-left: 3px; }
.c1 { width: 60px; } .c2 { width: 60px; } .c3 { width: 117px; } .c4 { width: 14px; }
.pw { width: 12px; height: 16px; } .ey { width: 12px; height: 12px; } .cu { width: 18px; height: 16px; margin-left: -3px; color: #ddd; }
.node { display: flex; align-items: center; height: 18px; }
.node svg { width: 17px; height: 17px; margin-right: 4px; }
.lime { color: #3e9a2c; }
.g { position: relative; width: 18px; height: 18px; flex: none; margin-left: -2px; margin-right: 2px; text-align: center; }
.g.v::before, .g.tee::before, .g.m::before { content: ""; position: absolute; left: 9px; top: 0; bottom: 0; border-left: 1px solid #8c8c8c; }
.g.elbow::before { content: ""; position: absolute; left: 9px; top: 0; width: 9px; height: 9px; border: solid #8c8c8c; border-width: 0 0 1px 1px; }
.g.tee::after { content: ""; position: absolute; left: 9px; top: 9px; width: 9px; border-top: 1px solid #8c8c8c; }
.g.n { color: #111; font: bold 11px/17px var(--ui); z-index: 0; background: linear-gradient(#8c8c8c, #8c8c8c) 14px 9px / 5px 1px no-repeat; }
.g.n::after { content: ""; position: absolute; left: 4px; top: 4px; width: 10px; height: 10px; border-radius: 50%; background: #e4e4e4; z-index: -1; }
.g.n::before { content: ""; position: absolute; left: 9px; top: 0; height: 6px; border-left: 1px solid #8c8c8c; z-index: -2; }
.g.n.m::before { height: 18px; }
.nce { position: absolute; right: 6px; bottom: -2px; text-shadow: 0 0 2px #000; }
.scroll { width: 14px; display: flex; flex-direction: column; background: #211f20; flex: none; border-left: 1px solid #111; }
.scroll .thumb { margin-bottom: auto; height: 214px; background: linear-gradient(90deg, #585858, #3e3e3e); border-top: 1px solid #666; display: grid; place-items: center; }
.scroll .thumb::before { content: ""; width: 9px; height: 12px; background: conic-gradient(#0c0c0c 25%, #0000 0) 0 0 / 3px 3px; }
.scroll.tall .thumb { height: 55px; }
.scroll svg { width: 13px; height: 18px; padding: 3px 2px; background: #3a3a3a; border-top: 1px solid #000; color: #8a8a8a; }
.scroll .off { color: #505050; }
.filter { height: 25px; flex: none; display: flex; align-items: center; border-top: 1px solid #666; padding: 0 15px 0 4px; }
.filter .chk { width: 60px; }
.filter .field { flex: 1; height: 22px; }
.filter .drop { width: 17px; height: 22px; }
.detail { background: #383838; }
.dbar { height: 33px; flex: none; display: flex; align-items: center; padding: 0 4px 0 5px; gap: 2px; }
.dbar .ib { width: 22px; height: 22px; }
.dbar .q { margin: 4px; }
.trs svg { margin-bottom: 2px; }
.trs b { position: absolute; inset: 11px 0 0; font-size: 8px; line-height: 10px; color: #eee; }
.find { width: 272px; height: 24px; background: #303030; display: flex; align-items: center; padding-left: 6px; }
.find input { flex: 1; }
.dimmer { color: #5c5c5c; margin: 0 6px 0 3px; }
.dbody { flex: 1; min-height: 0; display: grid; grid-template-columns: 326fr 411fr; gap: 7px; }
.attrs { display: flex; flex-direction: column; background: #2d2d2d; border: 1px solid #1c1c1c; border-top: 3px solid #1c1c1c; min-width: 0; }
.attrs .n { width: 31%; }
.attrs th { text-align: left; font-weight: normal; height: 21px; padding: 0 5px; border-right: 1px solid #1c1c1c; border-bottom: 2px solid #1c1c1c; background: linear-gradient(#404040, #302a2a); }
.attrs td { height: 17px; padding: 0; background: #4e4029; }
.attrs td i { display: block; width: 11px; height: 9px; margin: -8px 0 0 9px; border: dotted #8f836d; border-width: 0 0 1px 1px; }
.ffield { margin-top: auto; height: 28px; border-top: 5px solid #383838; background: #121212; display: flex; align-items: center; padding-left: 5px; }
.views { display: flex; flex-direction: column; min-width: 0; }
.vtabs { display: flex; height: 22px; flex: none; }
.vtabs button { padding: 0 8px; height: 22px; border: 1px solid #000; border-left-width: 0; background: #424242; color: #d8d8d8; white-space: nowrap; }
.vtabs button:disabled { color: #757575; }
.vtabs .on { border-left-width: 1px; border-bottom-color: #383838; background: #383838; }
.vtabs .fill { border-bottom: 1px solid #000; }
.vbody { flex: 1; border: 1px solid #000; border-top: 0; }

/* parameters */
.nodehead { height: 28px; flex: none; display: flex; align-items: center; border-bottom: 1px solid #000; padding: 1px 2px 0; }
.nodehead label { font-weight: bold; margin-right: 4px; width: 50px; }
.nodehead .field { flex: 1; height: 23px; margin-right: 4px; }
.nodehead .grp { gap: 2px; }
.params { flex: 1; min-height: 0; display: flex; padding: 0 1px 0 2px; }
.plist { flex: 1; min-width: 0; overflow: hidden; padding-top: 2px; }
.fold { height: 24px; margin-bottom: 2px; background: #323232; display: flex; align-items: center; padding-left: 3px; gap: 5px; }
.fold > svg { width: 12px; height: 12px; color: #e0e0e0; }
.fold > span { width: 128px; }
.prow { display: flex; align-items: center; margin-top: 11px; }
.prow > label { width: 138px; text-align: right; margin-right: 14px; }
.w43 { width: 43px; }
.pm { width: 17px; height: 20px; border: 1px solid #000; background: #404040; font: bold 14px/16px var(--ui); }
.clear { width: 59px; height: 21px; margin-left: 3px; }
.multi { display: flex; margin: 8px 13px 0 21px; gap: 6px; }
.mbtns { display: flex; height: 20px; }
.mbtns button { width: 19px; background: #444; border: 1px solid #1c1c1c; display: grid; place-items: center; }
.mbtns .x { color: #e8c4c4; font-weight: bold; font-size: 14px; line-height: 16px; }
.mbtns svg { width: 12px; height: 12px; }
.mbox { flex: 1; min-width: 0; background: #373737; }
h3 { margin: 0; height: 24px; font-size: 11px; background: #4c4c4c; display: flex; align-items: center; gap: 5px; padding-left: 3px; }
h3 svg { width: 13px; height: 12px; color: #e0e0e0; }
.mgrid { display: grid; grid-template-columns: 137px minmax(0, 1fr); gap: 3px 14px; padding: 6px 10px 6px 0; align-items: center; }
.mgrid > label:not(.chk) { text-align: right; white-space: nowrap; }
.mgrid .chk { height: 18px; }
.filec { display: flex; align-items: center; }
.filec .field { flex: 1; }
.bold { font-weight: bold; color: #f0f0f0; }
.sq { width: 19px; height: 20px; display: grid; place-items: center; color: #777; background: linear-gradient(#404040, #2c2626); border: 1px solid #1c1c1c; margin-left: 1px; }
.sq svg { width: 11px; height: 11px; }
.pk { margin: 0 2px 0 8px; }
.pk svg { width: 14px; height: 16px; }
.num { display: flex; gap: 5px; }
.num .field { width: 74px; }
input[type=range] { appearance: none; flex: 1; height: 22px; }
input[type=range]::-webkit-slider-runnable-track { height: 4px; border-radius: 2px; background: linear-gradient(90deg, #2a5cb8 50%, #000 50%); border: 1px solid #000; }
.r17::-webkit-slider-runnable-track { background: linear-gradient(90deg, #2a5cb8 20%, #000 20%) !important; }
input[type=range]::-webkit-slider-thumb { appearance: none; width: 6px; height: 21px; margin-top: -10px; background: linear-gradient(90deg, #bbb, #777); border: 1px solid #000; }
.reload { display: block; width: 94px; height: 23px; margin: 5px 0 0 154px; }
hr { margin: 12px 9px 13px 15px; border: 0; border-top: 1px solid #505050; }
.multiin { height: 18px; margin-left: 153px; }
.ops { display: flex; gap: 3px; height: 26px; margin-top: 3px; }
.ops > * { border: 1px solid #000; background: #333; width: 16px; flex: none; }
.ops span { flex: 1; padding-left: 3px; line-height: 20px; }

/* network editor */
.netmenu { height: 26px; flex: none; display: flex; align-items: center; border-bottom: 1px solid #000; background: linear-gradient(#3d3d3d, #303030); padding-right: 2px; }
.netmenu .menu { flex: 1; padding: 0 9px 0 27px; justify-content: space-between; gap: 4px; }
.network { flex: 1; min-height: 0; overflow: hidden; background: #2d2d2d; }
.network text { font-family: var(--ui); }
.nl { font-size: 9px; fill: #c4c4c4; }
.nd { font-size: 8px; fill: #7596a0; }
.nd .hi { fill: #8cc0d2; }
.wm { font-size: 19px; fill: #464646; }
.ctx { font-size: 23px; font-weight: bold; fill: #545454; }
.tip { font-size: 15px; fill: #c4c4c4; }
.ri { font-size: 11px; font-weight: bold; fill: #ddd; }

/* playbar */
.playbar { height: 71px; flex: none; display: flex; background: #2d2d2d; border-top: 1px solid #5a5a5a; border-bottom: 1px solid #000; padding-right: 5px; }
.transport { padding: 7px 0 0 6px; width: 226px; }
.trow { display: flex; height: 28px; }
.trow button { width: 27px; border: 1px solid #161616; border-left-width: 0; background: linear-gradient(#484848, #353535); display: grid; place-items: center; }
.trow .on { background: linear-gradient(#4f6b8f, #6c8bab); }
.trow svg { width: 17px; height: 17px; }
.trow .w24 { width: 23px; height: 18px; }
.trow .nar { width: 14px; }
.trow .nar svg { width: 13px; height: 13px; }
.frame { width: 47px; height: 28px; margin: 0 2px 0 3px; }
.trow.low { margin-top: 7px; height: 24px; }
.trow .dk { width: 23px; background: #333; }
.trow .dk.first { margin-left: 4px; }
.trow .dk svg { width: 13px; height: 13px; }
.timeline { flex: 1; min-width: 0; }
.ruler { position: relative; height: 42px; display: flex; padding-left: 30px; overflow: hidden; background: linear-gradient(#b0b0b0, #b0b0b0) 0 22px / 100% 1px no-repeat; font-size: 10px; color: #8c8c8c; }
.ruler i { flex: 1 0 0; min-width: 0; height: 15px; margin-top: 15px; background: linear-gradient(#707070, #707070) 0 4px / 1px 9px no-repeat; }
.ruler i:nth-of-type(4n) { margin-top: 0; height: 31px; line-height: 14px; background: linear-gradient(#b0b0b0, #b0b0b0) 0 16px / 1px 15px no-repeat; }
.ruler i.end { flex: 0 0 6px; }
.start { position: absolute; left: 2px; top: 0; line-height: 14px; }
.marker { position: absolute; top: 1px; width: 25px; height: 18px; margin-left: -12px; border: 1px solid #f0f0f0; background: #000; color: #fff; font: 12px/16px var(--ui); text-align: center; }
.marker::after { content: ""; position: absolute; left: 8px; top: 16px; border: 4px solid transparent; border-top-color: #f0f0f0; border-bottom: 0; }
.range { display: flex; align-items: center; }
.range .field { width: 42px; height: 22px; margin-right: 4px; }
.range .field:last-child { margin-right: 0; }
.range .dim { background: #282828; }
.track { flex: 1; height: 3px; background: #707070; }
.ends { width: 8px; height: 12px; color: #aaa; }
.ends.flip { transform: scaleX(-1); margin-right: 4px; }
.keybox { width: 62px; position: relative; margin-left: 3px; }
.round { position: absolute; left: 1px; top: 14px; width: 38px; height: 38px; border: 1px solid #1a1a1a; border-radius: 50%; background: #333; display: grid; place-items: center; }
.round svg { width: 18px; height: 18px; }
.keybox .sq { position: absolute; left: 36px; top: 22px; width: 18px; height: 20px; }
.chans { width: 182px; padding-top: 7px; display: grid; grid-template: 24px 24px / 23px 1fr; gap: 4px 5px; }
.ibx { border: 1px solid #000; background: #3c3c3c; display: grid; place-items: center; }
.ibx svg { width: 18px; height: 18px; }
.keys { display: flex; align-items: center; justify-content: space-between; padding: 0 3px 0 17px; white-space: nowrap; }
.keys svg { color: #8a8a8a; }
.chans .combo { border: 1px solid #1c1c1c; padding-left: 14px; height: 22px; }
.status { height: 25px; flex: none; display: flex; align-items: center; justify-content: space-between; background: #171717; padding-left: 2px; }
.upd { display: flex; align-items: center; height: 25px; background: #363636; padding-right: 1px; width: 172px; }
.upd .ib { width: 27px; }
.upd .combo { flex: 1; height: 25px; padding-left: 15px; }
```
